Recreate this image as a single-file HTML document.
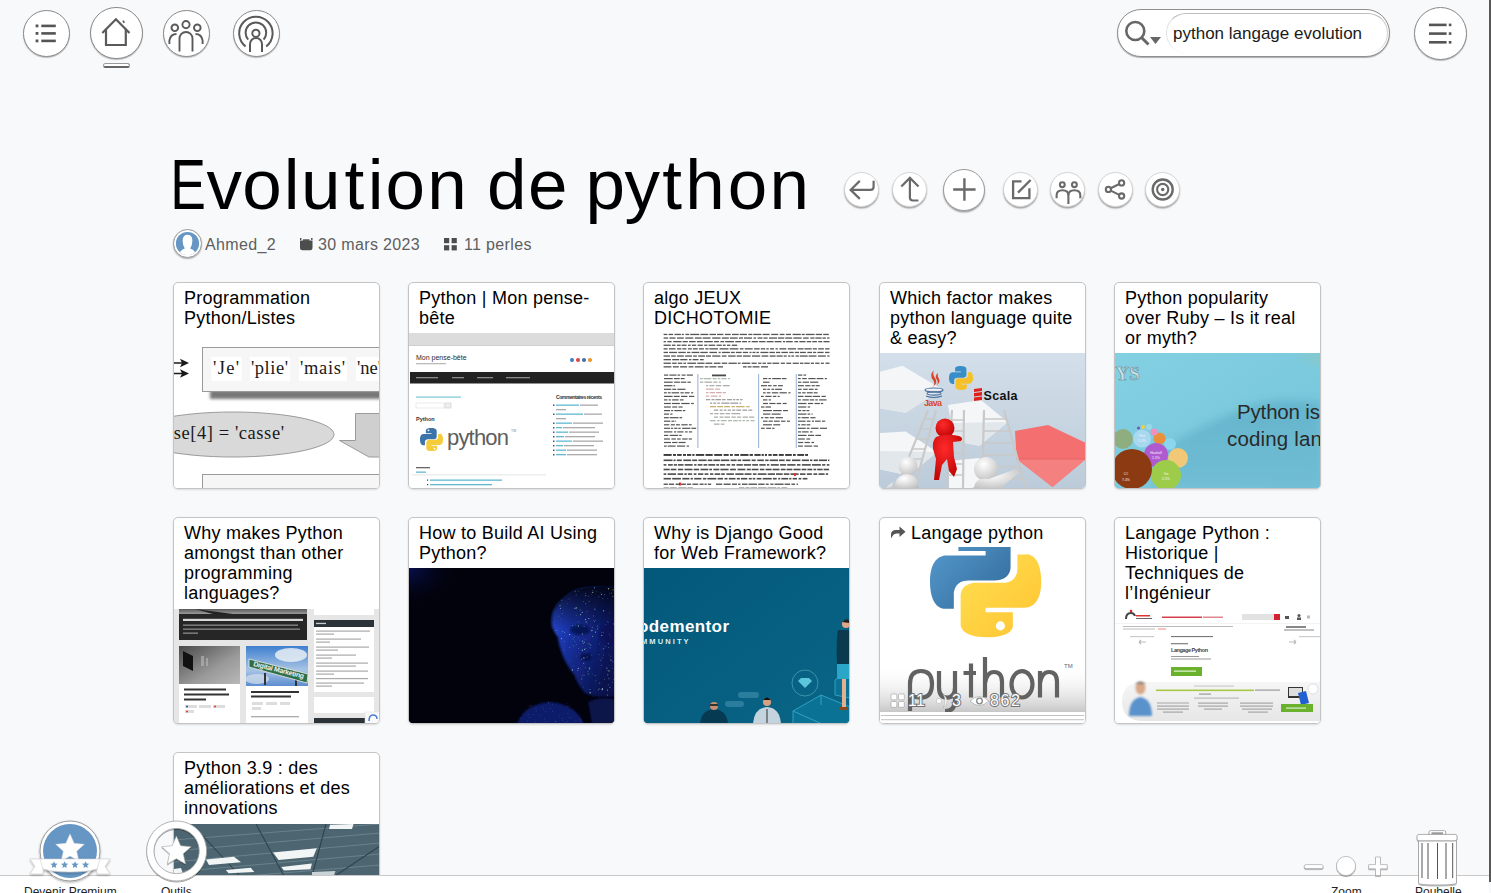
<!DOCTYPE html>
<html><head><meta charset="utf-8">
<style>
*{box-sizing:border-box;margin:0;padding:0}
html,body{width:1491px;height:893px;overflow:hidden}
body{background:#f8f9fb;font-family:"Liberation Sans",sans-serif;position:relative;color:#000}
.abs{position:absolute}
.circ{position:absolute;border-radius:50%;background:#fff;border:1.5px solid #8a8a8a;box-shadow:0 1px 1px rgba(0,0,0,.25)}
.circ svg{position:absolute;left:0;top:0}
.act{position:absolute;border-radius:50%;background:#fff;border:1px solid #d6d6d6;box-shadow:0 1.5px 1.5px rgba(0,0,0,.35)}
.act svg{position:absolute;left:0;top:0}
.card{position:absolute;width:207px;height:207px;background:#fff;border:1px solid #c4c4c4;border-radius:5px;box-shadow:0 1px 2px rgba(0,0,0,.12);overflow:hidden}
.card .t{position:absolute;left:10px;top:5px;width:190px;font-size:18px;line-height:20px;letter-spacing:0.25px;color:#000;white-space:nowrap}
.card .img{position:absolute;left:-1px;right:-1px;bottom:-1px;overflow:hidden;border-radius:0 0 5px 5px}
.card .img svg{display:block}
#bottom{position:absolute;left:0;top:875px;width:1489px;height:18px;background:#fff;border-top:1px solid #c9c9c9}
.meta{font-size:16px;color:#5e5e5e;letter-spacing:0.35px;white-space:nowrap;line-height:20px;margin-top:1px}
.lbl{position:absolute;top:885px;font-size:12px;color:#222;white-space:nowrap}
</style></head>
<body>

<!-- top nav circles -->
<div class="circ" style="left:23px;top:9.5px;width:47px;height:47px">
 <svg width="44" height="44" viewBox="0 0 44 44"><g fill="#555"><rect x="11.6" y="13.5" width="2.8" height="2.8"/><rect x="11.6" y="21" width="2.8" height="2.8"/><rect x="11.6" y="28.5" width="2.8" height="2.8"/><rect x="17.3" y="13.6" width="14.5" height="2.6"/><rect x="17.3" y="21.1" width="14.5" height="2.6"/><rect x="17.3" y="28.6" width="14.5" height="2.6"/></g></svg>
</div>
<div class="circ" style="left:90px;top:6.5px;width:52.5px;height:52.5px">
 <svg width="50" height="50" viewBox="0 0 50 50"><path d="M11.3 24.9 L24.9 11.2 L38.5 24.9" fill="none" stroke="#5a5a5a" stroke-width="2.2"/><path d="M15 20.8 V37 H34.8 V20.8" fill="none" stroke="#5a5a5a" stroke-width="2.2"/><rect x="31.8" y="12.5" width="1.7" height="2.6" fill="#5a5a5a" transform="rotate(-25 32.6 13.8)"/></svg>
</div>
<div class="abs" style="left:103px;top:63px;width:27px;height:5px;border-radius:3px;background:#fff;border:1px solid #9a9a9a;border-bottom:2px solid #666"></div>
<div class="circ" style="left:163px;top:9.5px;width:47px;height:47px">
 <svg width="44" height="44" viewBox="0 0 44 44" fill="none" stroke="#5a5a5a" stroke-width="1.9"><circle cx="22" cy="13.6" r="3.6"/><circle cx="10.8" cy="16.8" r="3.3"/><circle cx="33.3" cy="16.8" r="3.3"/><path d="M15.5 40.5 V27.5 A6.5 6.5 0 0 1 28.5 27.5 V40.5"/><path d="M12.5 23 Q6.5 23 5.4 29.5 V33"/><path d="M31.5 23 Q37.5 23 38.6 29.5 V33"/></svg>
</div>
<div class="circ" style="left:233px;top:9.5px;width:47px;height:47px">
 <svg width="44" height="44" viewBox="0 0 44 44" fill="none" stroke="#5a5a5a" stroke-width="2"><circle cx="21.9" cy="22.3" r="3.6"/><path d="M11.6 35.5 A16.7 16.7 0 1 1 32.2 35.5"/><path d="M14.2 28.6 A10.3 10.3 0 1 1 29.6 28.6"/><path d="M16 41 V33 A6 6 0 0 1 28 33 V41"/></svg>
</div>

<!-- search -->
<div class="abs" style="left:1117px;top:9px;width:273px;height:48px;border-radius:24px;background:#fff;border:1.5px solid #8f8f8f;box-shadow:0 1px 1px rgba(0,0,0,.3)"></div>
<div class="abs" style="left:1166px;top:13px;width:222px;height:40px;border-radius:20px;background:#fff;border-top:1.5px solid #bdbdbd;border-left:1px solid #e3e3e3;border-right:1.5px solid #cfcfcf"></div>
<svg class="abs" style="left:1120px;top:12px" width="48" height="40" viewBox="0 0 48 40"><circle cx="15.3" cy="19" r="9" fill="none" stroke="#666" stroke-width="2.6"/><path d="M21.5 25.5 L28.5 32.5" stroke="#666" stroke-width="3" stroke-linecap="butt"/><path d="M30 25 H41 L35.5 32 Z" fill="#666"/></svg>
<div class="abs" style="left:1173px;top:24px;font-size:17px;color:#1a1a1a;white-space:nowrap">python langage evolution</div>

<div class="circ" style="left:1414px;top:7px;width:53px;height:53px">
 <svg width="50" height="50" viewBox="0 0 50 50"><g fill="#555"><rect x="14" y="15.6" width="17.6" height="2.6"/><rect x="14" y="24.3" width="17.6" height="2.6"/><rect x="14" y="33" width="17.6" height="2.6"/><rect x="33.8" y="15.6" width="2.6" height="2.6"/><rect x="33.8" y="24.3" width="2.6" height="2.6"/><rect x="33.8" y="33" width="2.6" height="2.6"/></g></svg>
</div>
<div class="abs" style="left:1489px;top:0;width:2px;height:882px;background:#585858"></div>

<!-- title -->
<svg class="abs" style="left:0;top:130px" width="840" height="100" viewBox="0 130 840 100" font-family="Liberation Sans" font-size="71" fill="#000">
<text transform="translate(170.18,0) scale(0.7526,1)" x="0" y="209">E</text>
<text x="206.6 242.2 283.8 301.1 344.4 367.7 385.6 427.2" y="209">volution</text>
<text x="487.0 528.1" y="209">de</text>
<text x="585.6 624.4 662.2 685.3 727.8 769.4" y="209">python</text>
</svg>

<!-- action buttons -->
<div class="act" style="left:844px;top:172px;width:35px;height:35px"><svg width="33" height="33" viewBox="0 0 33 33" fill="none" stroke="#6a6a6a" stroke-width="2.2"><path d="M14.8 7.9 L5.6 16.9 L14.8 25.9"/><path d="M5.8 16.9 H25.5 Q28.6 16.9 28.6 13.8 V7.8"/></svg></div>
<div class="act" style="left:892px;top:172px;width:35px;height:35px"><svg width="33" height="33" viewBox="0 0 33 33" fill="none" stroke="#6a6a6a" stroke-width="2.2"><path d="M8.3 13.6 L16.9 4.9 L25.5 13.6"/><path d="M16.9 5.2 V24.5 Q16.9 27.5 19.9 27.5 H25.4"/></svg></div>
<div class="act" style="left:943px;top:169px;width:42px;height:42px;border-color:#9c9c9c"><svg width="40" height="40" viewBox="0 0 40 40" stroke="#6a6a6a" stroke-width="2.4"><path d="M9.2 19.5 H31.6 M20.4 8.3 V30.7"/></svg></div>
<div class="act" style="left:1003px;top:172px;width:35px;height:35px"><svg width="33" height="33" viewBox="0 0 33 33" fill="none" stroke="#6a6a6a" stroke-width="2.3"><path d="M17.5 8.3 H9.1 V25.1 H25.4 V15.3"/><path d="M14 19.6 L26.6 7"/></svg></div>
<div class="act" style="left:1050px;top:172px;width:35px;height:35px"><svg width="33" height="33" viewBox="0 0 33 33" fill="none" stroke="#6a6a6a" stroke-width="2.1"><circle cx="11.3" cy="11.7" r="2.4"/><circle cx="23.4" cy="11.7" r="2.4"/><path d="M5.6 25.3 V22.2 Q5.6 17.2 11.5 17.2 Q17.4 17.2 17.4 22.2 V31"/><path d="M17.4 22.2 Q17.4 17.2 23.4 17.2 Q29.3 17.2 29.3 22.2 V25.3"/></svg></div>
<div class="act" style="left:1098px;top:172px;width:35px;height:35px"><svg width="33" height="33" viewBox="0 0 33 33" fill="none" stroke="#6a6a6a" stroke-width="2.1"><circle cx="9.4" cy="16.4" r="2.6"/><circle cx="22.6" cy="9.9" r="2.6"/><circle cx="22.6" cy="23" r="2.6"/><path d="M11.7 15.2 L20.3 11 M11.7 17.6 L20.3 21.9"/></svg></div>
<div class="act" style="left:1145px;top:172px;width:35px;height:35px"><svg width="33" height="33" viewBox="0 0 33 33" fill="none" stroke="#6a6a6a"><circle cx="16.7" cy="16.5" r="10" stroke-width="2.4"/><circle cx="16.7" cy="16.5" r="5.6" stroke-width="2.1"/><circle cx="16.7" cy="16.5" r="1.7" fill="#6a6a6a" stroke="none"/></svg></div>

<!-- meta -->
<div class="abs" style="left:173px;top:229px;width:29px;height:29px;border-radius:50%;background:#fff;border:1px solid #9a9a9a;box-shadow:0 1px 1.5px rgba(0,0,0,.3)"><svg width="27" height="27" viewBox="0 0 27 27" style="position:absolute;left:0;top:0"><circle cx="13.5" cy="13.5" r="11.6" fill="#6596c4"/><clipPath id="avc"><circle cx="13.5" cy="13.5" r="11.6"/></clipPath><path clip-path="url(#avc)" d="M4 27 Q5 20.5 10.8 18.5 Q8.6 15 8.6 10.5 Q8.8 4.8 13.5 4.8 Q18.2 4.8 18.4 10.5 Q18.4 15 16.2 18.5 Q22 20.5 23 27Z" fill="#fff"/></svg></div>
<div class="abs meta" style="left:205px;top:234px">Ahmed_2</div>
<svg class="abs" style="left:300px;top:238px" width="13" height="13" viewBox="0 0 13 13"><path d="M0 2.5 H12.5 V10 Q12.5 12.3 10.2 12.3 H2.3 Q0 12.3 0 10 Z" fill="#4d4d4d"/><rect x="0" y="0" width="1.4" height="2" fill="#4d4d4d"/><rect x="11.1" y="0" width="1.4" height="2" fill="#4d4d4d"/><rect x="3" y="1.3" width="6.5" height="1.6" fill="#4d4d4d"/></svg>
<div class="abs meta" style="left:318px;top:234px">30 mars 2023</div>
<svg class="abs" style="left:444px;top:238px" width="13" height="13" viewBox="0 0 13 13" fill="#4d4d4d"><rect x="0" y="0" width="5.2" height="5.2"/><rect x="7.6" y="0" width="5.2" height="5.2"/><rect x="0" y="7.2" width="5.2" height="5.2"/><rect x="7.6" y="7.2" width="5.2" height="5.2"/></svg>
<div class="abs meta" style="left:464px;top:234px">11 perles</div>

<!-- cards -->
<div class="card" style="left:173px;top:282px"><div class="t">Programmation<br>Python/Listes</div><div class="img" style="top:50px;background:#f4f4f4"><svg width="207" height="156" viewBox="0 0 207 156" font-family="Liberation Serif">
<defs><filter id="b1" x="-10%" y="-50%" width="120%" height="200%"><feGaussianBlur stdDeviation="1.6"/></filter></defs>
<rect width="207" height="156" fill="#fff"/>
<rect x="37" y="57" width="175" height="9" fill="#6a6a6a" opacity=".9" filter="url(#b1)"/>
<rect x="29.5" y="14.5" width="180" height="44" fill="#f6f6f6" stroke="#9a9a9a"/>
<g fill="#fff"><rect x="38.5" y="24" width="30" height="24"/><rect x="77" y="24" width="40" height="24"/><rect x="126" y="24" width="48" height="24"/><rect x="183" y="24" width="30" height="24"/></g>
<g font-size="18.5" fill="#1a1a1a"><text x="40" y="40.5" textLength="26">'Je'</text><text x="78" y="40.5" textLength="37">'plie'</text><text x="127" y="40.5" textLength="45">'mais'</text><text x="184" y="40.5">'ne'</text></g>
<g stroke="#1a1a1a" stroke-width="1.4"><path d="M0 30 H10 M0 40.5 H10"/></g><g fill="#1a1a1a"><path d="M7 25.8 L16 30 L7 34.2 L9 30Z"/><path d="M7 36.3 L16 40.5 L7 44.7 L9 40.5Z"/></g>
<ellipse cx="60" cy="101.5" rx="101" ry="22.5" fill="#d9d9d9" stroke="#9a9a9a"/>
<text x="-8" y="106" font-size="18.5" fill="#1a1a1a" textLength="119">ase[4] = 'casse'</text>
<path d="M182.5 80.5 H210 V124 L196 124 L166.5 107.5 H182.5Z" fill="#cfcfcf" stroke="#9a9a9a"/>
<rect x="29.5" y="141.5" width="180" height="30" fill="#f6f6f6" stroke="#9a9a9a"/>
<rect x="0" y="0" width="1" height="156" fill="#cfcfcf"/>
</svg></div></div>
<div class="card" style="left:408px;top:282px"><div class="t">Python | Mon pense-<br>bête</div><div class="img" style="top:50px;background:#eee"><svg width="207" height="156" viewBox="0 0 207 156" font-family="Liberation Sans">
<rect width="207" height="156" fill="#fff"/>
<rect x="0" y="0" width="207" height="12" fill="#dcdcdc"/>
<rect x="0" y="12" width="207" height="1" fill="#cfcfcf"/>
<text x="8" y="27" font-size="7" fill="#2a2a2a">Mon pense-bête</text>
<rect x="8" y="30" width="30" height="1.3" fill="#bbb"/>
<circle cx="164" cy="27" r="2" fill="#3b7fc4"/><circle cx="170" cy="27" r="2" fill="#d44"/><circle cx="176" cy="27" r="2" fill="#3b6fb4"/><circle cx="182" cy="27" r="2" fill="#e8962a"/>
<rect x="2" y="39" width="204" height="11.5" fill="#222"/>
<g fill="#8a8a8a"><rect x="8" y="44" width="22" height="1.3"/><rect x="44" y="44" width="12" height="1.3"/><rect x="69" y="44" width="16" height="1.3"/><rect x="98" y="44" width="24" height="1.3"/></g>
<rect x="8" y="63.5" width="45" height="1.2" fill="#7cc5d8"/>
<rect x="8" y="70" width="28" height="5" fill="#fff" stroke="#ddd" stroke-width=".6"/><rect x="37" y="70" width="6" height="5" fill="#eee" stroke="#ccc" stroke-width=".6"/>
<text x="8" y="88" font-size="5.5" font-weight="bold" fill="#333">Python</text>
<g transform="translate(12,95) scale(0.235)">
<path d="M48 0 C23 0 25 11 25 11 V22 H49 V26 H15 C15 26 0 24 0 49 C0 74 13 73 13 73 H21 V61 C21 61 20 48 34 48 H58 C58 48 71 48 71 36 V12 C71 12 73 0 48 0Z" fill="#3a74a8"/>
<path d="M50 98 C75 98 73 87 73 87 V76 H49 V72 H83 C83 72 98 74 98 49 C98 24 85 25 85 25 H77 V37 C77 37 78 50 64 50 H40 C40 50 27 50 27 62 V86 C27 86 25 98 50 98Z" fill="#f5cc3a"/>
<circle cx="36" cy="10" r="4" fill="#fff"/><circle cx="62" cy="88" r="4" fill="#fff"/>
</g>
<text x="39" y="112" font-size="22" fill="#5e5e5e" textLength="62">python</text>
<text x="103" y="99" font-size="3.5" fill="#888">TM</text>
<text x="148" y="66" font-size="5" font-weight="bold" fill="#333" textLength="46">Commentaires récents</text>
<g fill="#555"><rect x="145" y="71.5" width="1.5" height="1.5"/><rect x="145" y="80.5" width="1.5" height="1.5"/><rect x="145" y="89.5" width="1.5" height="1.5"/><rect x="145" y="94" width="1.5" height="1.5"/><rect x="145" y="98.5" width="1.5" height="1.5"/><rect x="145" y="103" width="1.5" height="1.5"/><rect x="145" y="107.5" width="1.5" height="1.5"/><rect x="145" y="112" width="1.5" height="1.5"/><rect x="145" y="116.5" width="1.5" height="1.5"/><rect x="145" y="121" width="1.5" height="1.5"/></g>
<g fill="#62b7d2"><rect x="148" y="71.5" width="23" height="1.3"/><rect x="148" y="80.5" width="27" height="1.3"/><rect x="148" y="89.5" width="16" height="1.3"/><rect x="148" y="94" width="6" height="1.3"/><rect x="148" y="98.5" width="12" height="1.3"/><rect x="148" y="103" width="8" height="1.3"/><rect x="148" y="107.5" width="16" height="1.3"/><rect x="148" y="112" width="7" height="1.3"/><rect x="148" y="116.5" width="10" height="1.3"/><rect x="148" y="121" width="10" height="1.3"/></g>
<g fill="#aaa"><rect x="172" y="71.5" width="18" height="1.3"/><rect x="148" y="76" width="10" height="1.3"/><rect x="176" y="80.5" width="18" height="1.3"/><rect x="148" y="85" width="10" height="1.3"/><rect x="165" y="89.5" width="30" height="1.3"/><rect x="155" y="94" width="32" height="1.3"/><rect x="161" y="98.5" width="30" height="1.3"/><rect x="157" y="103" width="30" height="1.3"/><rect x="165" y="107.5" width="30" height="1.3"/><rect x="156" y="112" width="30" height="1.3"/><rect x="159" y="116.5" width="30" height="1.3"/><rect x="159" y="121" width="30" height="1.3"/></g>
<rect x="8" y="134" width="14" height="1.3" fill="#666"/>
<rect x="8" y="138.5" width="10" height="1.3" fill="#62b7d2"/>
<rect x="4" y="141.5" width="134" height=".8" fill="#ddd"/>
<g fill="#444"><rect x="19" y="146.5" width="1.2" height="1.2"/><rect x="19" y="151" width="1.2" height="1.2"/><rect x="19" y="155.5" width="1.2" height="1.2"/></g>
<g fill="#62b7d2"><rect x="22" y="146.5" width="72" height="1.3"/><rect x="22" y="151" width="62" height="1.3"/><rect x="22" y="155.5" width="68" height="1.3"/></g>
</svg></div></div>
<div class="card" style="left:643px;top:282px"><div class="t">algo JEUX<br>DICHOTOMIE</div><div class="img" style="top:50px;background:#ddd"><svg width="207" height="156" viewBox="0 0 207 156">
<rect width="207" height="156" fill="#fff"/>
<g fill="#555" opacity="1"><rect x="20.6" y="0.8" width="3.7" height="1.3"/><rect x="25.5" y="0.8" width="4.6" height="1.3"/><rect x="31.5" y="0.8" width="6.4" height="1.3"/><rect x="38.8" y="0.8" width="2.1" height="1.3"/><rect x="42.4" y="0.8" width="3.8" height="1.3"/><rect x="47.2" y="0.8" width="9.0" height="1.3"/><rect x="57.4" y="0.8" width="7.9" height="1.3"/><rect x="66.5" y="0.8" width="6.5" height="1.3"/><rect x="74.0" y="0.8" width="6.4" height="1.3"/><rect x="82.0" y="0.8" width="5.7" height="1.3"/><rect x="89.0" y="0.8" width="6.7" height="1.3"/><rect x="96.7" y="0.8" width="7.3" height="1.3"/><rect x="105.3" y="0.8" width="4.1" height="1.3"/><rect x="110.3" y="0.8" width="8.1" height="1.3"/><rect x="119.6" y="0.8" width="7.0" height="1.3"/><rect x="128.2" y="0.8" width="7.0" height="1.3"/><rect x="136.7" y="0.8" width="4.8" height="1.3"/><rect x="142.9" y="0.8" width="5.1" height="1.3"/><rect x="149.6" y="0.8" width="8.2" height="1.3"/><rect x="158.7" y="0.8" width="3.0" height="1.3"/><rect x="162.7" y="0.8" width="8.8" height="1.3"/><rect x="172.7" y="0.8" width="6.4" height="1.3"/><rect x="180.2" y="0.8" width="5.6" height="1.3"/></g>
<g fill="#555" opacity="1"><rect x="20.6" y="4.4" width="4.5" height="1.3"/><rect x="26.4" y="4.4" width="6.1" height="1.3"/><rect x="34.0" y="4.4" width="6.8" height="1.3"/><rect x="42.3" y="4.4" width="8.0" height="1.3"/><rect x="51.9" y="4.4" width="6.7" height="1.3"/><rect x="59.6" y="4.4" width="8.0" height="1.3"/><rect x="69.2" y="4.4" width="8.3" height="1.3"/><rect x="78.8" y="4.4" width="7.0" height="1.3"/><rect x="86.9" y="4.4" width="7.8" height="1.3"/><rect x="96.0" y="4.4" width="4.0" height="1.3"/><rect x="101.0" y="4.4" width="8.0" height="1.3"/><rect x="110.5" y="4.4" width="2.6" height="1.3"/><rect x="114.6" y="4.4" width="4.9" height="1.3"/><rect x="120.5" y="4.4" width="4.1" height="1.3"/><rect x="126.0" y="4.4" width="8.1" height="1.3"/><rect x="135.0" y="4.4" width="6.3" height="1.3"/><rect x="142.2" y="4.4" width="7.0" height="1.3"/><rect x="150.4" y="4.4" width="8.2" height="1.3"/><rect x="160.2" y="4.4" width="5.5" height="1.3"/><rect x="167.3" y="4.4" width="4.2" height="1.3"/><rect x="172.4" y="4.4" width="6.2" height="1.3"/><rect x="179.5" y="4.4" width="3.4" height="1.3"/><rect x="184.1" y="4.4" width="2.4" height="1.3"/></g>
<g fill="#555" opacity="1"><rect x="20.6" y="8.0" width="2.3" height="1.3"/><rect x="24.4" y="8.0" width="4.2" height="1.3"/><rect x="30.2" y="8.0" width="8.3" height="1.3"/><rect x="39.6" y="8.0" width="5.2" height="1.3"/><rect x="46.1" y="8.0" width="6.5" height="1.3"/><rect x="53.9" y="8.0" width="5.9" height="1.3"/><rect x="61.2" y="8.0" width="8.6" height="1.3"/><rect x="71.0" y="8.0" width="5.0" height="1.3"/><rect x="77.4" y="8.0" width="3.7" height="1.3"/><rect x="82.2" y="8.0" width="8.8" height="1.3"/><rect x="92.3" y="8.0" width="5.8" height="1.3"/><rect x="99.1" y="8.0" width="4.9" height="1.3"/><rect x="105.3" y="8.0" width="2.1" height="1.3"/><rect x="108.7" y="8.0" width="6.4" height="1.3"/><rect x="116.1" y="8.0" width="6.4" height="1.3"/><rect x="123.7" y="8.0" width="6.8" height="1.3"/><rect x="131.6" y="8.0" width="6.9" height="1.3"/><rect x="140.0" y="8.0" width="2.2" height="1.3"/><rect x="143.1" y="8.0" width="6.7" height="1.3"/><rect x="151.4" y="8.0" width="3.8" height="1.3"/><rect x="156.4" y="8.0" width="6.1" height="1.3"/><rect x="163.7" y="8.0" width="4.5" height="1.3"/><rect x="169.3" y="8.0" width="4.6" height="1.3"/><rect x="175.2" y="8.0" width="4.1" height="1.3"/><rect x="180.5" y="8.0" width="6.0" height="1.3"/></g>
<g fill="#555" opacity="1"><rect x="20.6" y="11.6" width="7.1" height="1.3"/><rect x="28.9" y="11.6" width="3.6" height="1.3"/><rect x="33.9" y="11.6" width="3.7" height="1.3"/><rect x="38.6" y="11.6" width="5.0" height="1.3"/><rect x="45.0" y="11.6" width="2.7" height="1.3"/><rect x="48.9" y="11.6" width="4.3" height="1.3"/><rect x="54.7" y="11.6" width="5.1" height="1.3"/><rect x="61.2" y="11.6" width="3.2" height="1.3"/><rect x="65.6" y="11.6" width="6.6" height="1.3"/><rect x="73.6" y="11.6" width="5.2" height="1.3"/><rect x="79.9" y="11.6" width="2.8" height="1.3"/><rect x="84.0" y="11.6" width="3.3" height="1.3"/><rect x="88.8" y="11.6" width="5.4" height="1.3"/></g>
<g fill="#555" opacity="1"><rect x="20.6" y="15.2" width="4.0" height="1.3"/><rect x="26.0" y="15.2" width="6.5" height="1.3"/><rect x="34.0" y="15.2" width="4.4" height="1.3"/><rect x="39.4" y="15.2" width="4.0" height="1.3"/><rect x="44.9" y="15.2" width="3.9" height="1.3"/><rect x="49.9" y="15.2" width="4.9" height="1.3"/><rect x="56.0" y="15.2" width="4.9" height="1.3"/><rect x="62.4" y="15.2" width="3.1" height="1.3"/><rect x="66.4" y="15.2" width="8.6" height="1.3"/><rect x="76.6" y="15.2" width="8.9" height="1.3"/><rect x="86.7" y="15.2" width="8.7" height="1.3"/><rect x="96.9" y="15.2" width="3.6" height="1.3"/><rect x="101.8" y="15.2" width="7.9" height="1.3"/><rect x="111.1" y="15.2" width="5.6" height="1.3"/><rect x="117.8" y="15.2" width="4.4" height="1.3"/><rect x="123.3" y="15.2" width="2.5" height="1.3"/><rect x="127.0" y="15.2" width="4.0" height="1.3"/><rect x="132.5" y="15.2" width="2.3" height="1.3"/><rect x="136.4" y="15.2" width="6.9" height="1.3"/><rect x="144.8" y="15.2" width="8.3" height="1.3"/><rect x="154.6" y="15.2" width="6.0" height="1.3"/><rect x="161.5" y="15.2" width="7.2" height="1.3"/><rect x="169.8" y="15.2" width="4.1" height="1.3"/><rect x="175.2" y="15.2" width="5.7" height="1.3"/><rect x="182.1" y="15.2" width="4.4" height="1.3"/></g>
<g fill="#555" opacity="1"><rect x="20.6" y="18.8" width="4.4" height="1.3"/><rect x="26.1" y="18.8" width="8.0" height="1.3"/><rect x="35.3" y="18.8" width="7.5" height="1.3"/><rect x="44.0" y="18.8" width="3.4" height="1.3"/><rect x="48.6" y="18.8" width="7.7" height="1.3"/><rect x="57.3" y="18.8" width="7.5" height="1.3"/><rect x="66.4" y="18.8" width="7.6" height="1.3"/><rect x="75.6" y="18.8" width="2.1" height="1.3"/><rect x="78.9" y="18.8" width="8.0" height="1.3"/><rect x="87.9" y="18.8" width="3.9" height="1.3"/><rect x="92.9" y="18.8" width="5.7" height="1.3"/><rect x="99.8" y="18.8" width="5.3" height="1.3"/><rect x="106.5" y="18.8" width="2.0" height="1.3"/><rect x="109.5" y="18.8" width="2.9" height="1.3"/><rect x="113.4" y="18.8" width="2.5" height="1.3"/><rect x="117.4" y="18.8" width="8.0" height="1.3"/><rect x="126.4" y="18.8" width="5.5" height="1.3"/><rect x="133.0" y="18.8" width="4.2" height="1.3"/><rect x="138.4" y="18.8" width="6.5" height="1.3"/><rect x="146.2" y="18.8" width="4.5" height="1.3"/><rect x="151.8" y="18.8" width="4.3" height="1.3"/><rect x="157.0" y="18.8" width="5.9" height="1.3"/><rect x="164.3" y="18.8" width="4.7" height="1.3"/><rect x="170.0" y="18.8" width="3.2" height="1.3"/><rect x="174.4" y="18.8" width="6.2" height="1.3"/><rect x="182.0" y="18.8" width="4.5" height="1.3"/></g>
<g fill="#555" opacity="1"><rect x="20.6" y="22.4" width="6.4" height="1.3"/><rect x="28.2" y="22.4" width="4.6" height="1.3"/><rect x="34.0" y="22.4" width="6.9" height="1.3"/><rect x="42.1" y="22.4" width="6.9" height="1.3"/><rect x="50.2" y="22.4" width="3.7" height="1.3"/><rect x="55.2" y="22.4" width="6.9" height="1.3"/><rect x="63.0" y="22.4" width="5.0" height="1.3"/><rect x="69.2" y="22.4" width="8.2" height="1.3"/><rect x="78.9" y="22.4" width="4.6" height="1.3"/><rect x="85.1" y="22.4" width="7.5" height="1.3"/><rect x="93.7" y="22.4" width="5.2" height="1.3"/><rect x="99.9" y="22.4" width="7.7" height="1.3"/><rect x="109.0" y="22.4" width="8.2" height="1.3"/><rect x="118.6" y="22.4" width="6.7" height="1.3"/><rect x="126.7" y="22.4" width="5.9" height="1.3"/><rect x="133.6" y="22.4" width="6.1" height="1.3"/><rect x="140.7" y="22.4" width="3.0" height="1.3"/><rect x="145.1" y="22.4" width="2.3" height="1.3"/><rect x="148.4" y="22.4" width="2.7" height="1.3"/><rect x="152.6" y="22.4" width="3.3" height="1.3"/><rect x="156.8" y="22.4" width="7.9" height="1.3"/><rect x="165.6" y="22.4" width="7.9" height="1.3"/><rect x="174.9" y="22.4" width="7.9" height="1.3"/><rect x="184.3" y="22.4" width="2.2" height="1.3"/></g>
<g fill="#555" opacity="1"><rect x="20.6" y="26.0" width="7.4" height="1.3"/><rect x="29.2" y="26.0" width="7.0" height="1.3"/><rect x="37.2" y="26.0" width="7.2" height="1.3"/><rect x="46.0" y="26.0" width="2.4" height="1.3"/><rect x="49.6" y="26.0" width="5.9" height="1.3"/><rect x="57.0" y="26.0" width="3.7" height="1.3"/></g>
<g fill="#555" opacity="1"><rect x="20.6" y="29.6" width="7.3" height="1.3"/><rect x="29.1" y="29.6" width="4.6" height="1.3"/><rect x="34.8" y="29.6" width="4.5" height="1.3"/><rect x="40.4" y="29.6" width="2.6" height="1.3"/><rect x="44.3" y="29.6" width="8.8" height="1.3"/><rect x="54.3" y="29.6" width="7.2" height="1.3"/><rect x="62.5" y="29.6" width="6.8" height="1.3"/><rect x="70.8" y="29.6" width="6.7" height="1.3"/><rect x="78.8" y="29.6" width="5.4" height="1.3"/><rect x="85.5" y="29.6" width="8.3" height="1.3"/><rect x="94.8" y="29.6" width="2.7" height="1.3"/><rect x="98.9" y="29.6" width="8.4" height="1.3"/><rect x="108.6" y="29.6" width="5.1" height="1.3"/><rect x="115.1" y="29.6" width="3.3" height="1.3"/><rect x="119.5" y="29.6" width="3.4" height="1.3"/><rect x="124.2" y="29.6" width="4.2" height="1.3"/><rect x="129.4" y="29.6" width="6.8" height="1.3"/><rect x="137.8" y="29.6" width="4.1" height="1.3"/><rect x="143.3" y="29.6" width="4.9" height="1.3"/><rect x="149.7" y="29.6" width="6.1" height="1.3"/><rect x="156.9" y="29.6" width="3.5" height="1.3"/><rect x="161.3" y="29.6" width="5.4" height="1.3"/><rect x="167.8" y="29.6" width="3.2" height="1.3"/><rect x="172.2" y="29.6" width="4.3" height="1.3"/><rect x="177.9" y="29.6" width="3.0" height="1.3"/><rect x="182.5" y="29.6" width="4.0" height="1.3"/></g>
<g fill="#555" opacity="1"><rect x="20.6" y="33.2" width="7.8" height="1.3"/><rect x="29.9" y="33.2" width="5.9" height="1.3"/><rect x="37.1" y="33.2" width="7.0" height="1.3"/><rect x="45.6" y="33.2" width="4.8" height="1.3"/><rect x="51.8" y="33.2" width="8.7" height="1.3"/><rect x="61.8" y="33.2" width="3.6" height="1.3"/><rect x="66.4" y="33.2" width="7.0" height="1.3"/><rect x="74.8" y="33.2" width="5.2" height="1.3"/></g>
<g fill="#555" opacity="1"><rect x="100.0" y="33.2" width="3.7" height="1.3"/><rect x="104.7" y="33.2" width="3.8" height="1.3"/><rect x="109.6" y="33.2" width="6.9" height="1.3"/><rect x="118.0" y="33.2" width="7.0" height="1.3"/></g>
<g fill="#7b9cc8"><rect x="54.5" y="41" width=".8" height="74"/><rect x="115.3" y="41" width=".8" height="74"/><rect x="152.8" y="41" width=".8" height="74"/></g>
<rect x="69" y="41.5" width="14" height="1.8" fill="#4a4a4a"/>
<g fill="#555" opacity="1"><rect x="21.0" y="41.5" width="4.2" height="1.2"/><rect x="26.4" y="41.5" width="7.1" height="1.2"/><rect x="34.5" y="41.5" width="2.6" height="1.2"/><rect x="38.6" y="41.5" width="4.0" height="1.2"/><rect x="43.8" y="41.5" width="6.1" height="1.2"/></g>
<g fill="#555" opacity="1"><rect x="155.0" y="41.5" width="4.3" height="1.2"/><rect x="160.5" y="41.5" width="2.6" height="1.2"/></g>
<g fill="#555" opacity="1"><rect x="21.0" y="45.0" width="8.7" height="1.2"/><rect x="30.9" y="45.0" width="5.8" height="1.2"/><rect x="37.7" y="45.0" width="3.9" height="1.2"/></g>
<g fill="#555" opacity="1"><rect x="155.0" y="45.0" width="2.7" height="1.2"/><rect x="159.2" y="45.0" width="4.6" height="1.2"/><rect x="165.3" y="45.0" width="7.3" height="1.2"/><rect x="173.7" y="45.0" width="6.7" height="1.2"/><rect x="181.8" y="45.0" width="2.1" height="1.2"/></g>
<g fill="#555" opacity="1"><rect x="21.0" y="48.6" width="8.7" height="1.2"/><rect x="31.1" y="48.6" width="5.8" height="1.2"/><rect x="37.8" y="48.6" width="5.5" height="1.2"/><rect x="44.4" y="48.6" width="3.4" height="1.2"/></g>
<g fill="#555" opacity="1"><rect x="155.0" y="48.6" width="3.3" height="1.2"/><rect x="159.6" y="48.6" width="6.4" height="1.2"/><rect x="167.1" y="48.6" width="8.2" height="1.2"/></g>
<g fill="#555" opacity="1"><rect x="21.0" y="52.1" width="8.5" height="1.2"/><rect x="30.5" y="52.1" width="1.6" height="1.2"/></g>
<g fill="#555" opacity="1"><rect x="155.0" y="52.1" width="5.9" height="1.2"/><rect x="162.2" y="52.1" width="5.2" height="1.2"/><rect x="168.6" y="52.1" width="3.2" height="1.2"/><rect x="172.7" y="52.1" width="4.0" height="1.2"/></g>
<g fill="#555" opacity="1"><rect x="21.0" y="55.7" width="7.2" height="1.2"/><rect x="29.3" y="55.7" width="3.9" height="1.2"/><rect x="34.4" y="55.7" width="8.1" height="1.2"/></g>
<g fill="#555" opacity="1"><rect x="155.0" y="55.7" width="3.7" height="1.2"/><rect x="160.2" y="55.7" width="4.5" height="1.2"/><rect x="165.8" y="55.7" width="4.8" height="1.2"/><rect x="171.9" y="55.7" width="2.7" height="1.2"/></g>
<g fill="#555" opacity="1"><rect x="21.0" y="59.2" width="2.8" height="1.2"/><rect x="24.9" y="59.2" width="2.7" height="1.2"/><rect x="28.6" y="59.2" width="7.5" height="1.2"/><rect x="37.4" y="59.2" width="3.3" height="1.2"/><rect x="41.7" y="59.2" width="4.9" height="1.2"/><rect x="48.1" y="59.2" width="2.1" height="1.2"/></g>
<g fill="#555" opacity="1"><rect x="155.0" y="59.2" width="3.0" height="1.2"/><rect x="159.2" y="59.2" width="3.4" height="1.2"/><rect x="163.8" y="59.2" width="6.0" height="1.2"/><rect x="170.8" y="59.2" width="3.8" height="1.2"/></g>
<g fill="#555" opacity="1"><rect x="21.0" y="62.8" width="8.6" height="1.2"/><rect x="30.8" y="62.8" width="5.9" height="1.2"/><rect x="38.0" y="62.8" width="6.4" height="1.2"/><rect x="46.0" y="62.8" width="5.3" height="1.2"/></g>
<g fill="#555" opacity="1"><rect x="155.0" y="62.8" width="5.4" height="1.2"/><rect x="161.7" y="62.8" width="7.1" height="1.2"/><rect x="169.7" y="62.8" width="7.4" height="1.2"/><rect x="178.5" y="62.8" width="4.3" height="1.2"/></g>
<g fill="#555" opacity="1"><rect x="21.0" y="66.3" width="3.4" height="1.2"/><rect x="25.6" y="66.3" width="2.3" height="1.2"/><rect x="29.1" y="66.3" width="6.5" height="1.2"/><rect x="36.9" y="66.3" width="3.6" height="1.2"/></g>
<g fill="#555" opacity="1"><rect x="155.0" y="66.3" width="2.9" height="1.2"/><rect x="159.4" y="66.3" width="6.4" height="1.2"/><rect x="166.7" y="66.3" width="4.5" height="1.2"/><rect x="172.3" y="66.3" width="2.5" height="1.2"/><rect x="176.1" y="66.3" width="7.4" height="1.2"/></g>
<g fill="#555" opacity="1"><rect x="21.0" y="69.9" width="6.9" height="1.2"/><rect x="28.9" y="69.9" width="8.0" height="1.2"/><rect x="38.2" y="69.9" width="8.5" height="1.2"/><rect x="48.1" y="69.9" width="2.7" height="1.2"/></g>
<g fill="#555" opacity="1"><rect x="155.0" y="69.9" width="8.5" height="1.2"/><rect x="165.0" y="69.9" width="5.1" height="1.2"/><rect x="171.5" y="69.9" width="5.4" height="1.2"/><rect x="177.9" y="69.9" width="2.3" height="1.2"/></g>
<g fill="#555" opacity="1"><rect x="21.0" y="73.4" width="6.9" height="1.2"/><rect x="29.2" y="73.4" width="5.0" height="1.2"/><rect x="35.5" y="73.4" width="4.1" height="1.2"/></g>
<g fill="#555" opacity="1"><rect x="155.0" y="73.4" width="8.3" height="1.2"/><rect x="164.7" y="73.4" width="2.5" height="1.2"/></g>
<g fill="#555" opacity="1"><rect x="21.0" y="77.0" width="6.2" height="1.2"/><rect x="28.2" y="77.0" width="2.0" height="1.2"/><rect x="31.3" y="77.0" width="7.5" height="1.2"/><rect x="39.8" y="77.0" width="2.5" height="1.2"/></g>
<g fill="#555" opacity="1"><rect x="155.0" y="77.0" width="3.2" height="1.2"/><rect x="159.4" y="77.0" width="3.2" height="1.2"/><rect x="163.5" y="77.0" width="2.8" height="1.2"/></g>
<g fill="#555" opacity="1"><rect x="21.0" y="80.5" width="5.1" height="1.2"/><rect x="27.3" y="80.5" width="2.2" height="1.2"/></g>
<g fill="#555" opacity="1"><rect x="21.0" y="84.1" width="4.8" height="1.2"/><rect x="26.7" y="84.1" width="8.8" height="1.2"/><rect x="36.5" y="84.1" width="2.6" height="1.2"/></g>
<g fill="#555" opacity="1"><rect x="21.0" y="87.6" width="6.4" height="1.2"/><rect x="28.5" y="87.6" width="2.9" height="1.2"/><rect x="32.3" y="87.6" width="0.8" height="1.2"/></g>
<g fill="#555" opacity="1"><rect x="21.0" y="91.2" width="5.3" height="1.2"/><rect x="27.8" y="91.2" width="4.1" height="1.2"/><rect x="33.0" y="91.2" width="3.9" height="1.2"/><rect x="38.3" y="91.2" width="6.4" height="1.2"/><rect x="45.9" y="91.2" width="2.7" height="1.2"/></g>
<g fill="#555" opacity="1"><rect x="21.0" y="94.7" width="6.1" height="1.2"/><rect x="28.0" y="94.7" width="2.2" height="1.2"/><rect x="31.2" y="94.7" width="3.2" height="1.2"/><rect x="35.3" y="94.7" width="2.4" height="1.2"/><rect x="39.1" y="94.7" width="8.3" height="1.2"/><rect x="48.4" y="94.7" width="4.8" height="1.2"/></g>
<g fill="#555" opacity="1"><rect x="21.0" y="98.3" width="8.4" height="1.2"/><rect x="31.0" y="98.3" width="2.2" height="1.2"/><rect x="34.3" y="98.3" width="6.2" height="1.2"/><rect x="42.1" y="98.3" width="2.6" height="1.2"/><rect x="45.9" y="98.3" width="3.2" height="1.2"/></g>
<g fill="#555" opacity="1"><rect x="21.0" y="101.8" width="4.3" height="1.2"/><rect x="26.7" y="101.8" width="8.5" height="1.2"/><rect x="36.2" y="101.8" width="2.5" height="1.2"/></g>
<g fill="#555" opacity="1"><rect x="21.0" y="105.4" width="5.9" height="1.2"/><rect x="28.4" y="105.4" width="4.5" height="1.2"/><rect x="34.1" y="105.4" width="3.6" height="1.2"/><rect x="39.2" y="105.4" width="5.4" height="1.2"/><rect x="45.7" y="105.4" width="3.2" height="1.2"/></g>
<g fill="#555" opacity="1"><rect x="21.0" y="108.9" width="7.0" height="1.2"/><rect x="29.1" y="108.9" width="5.4" height="1.2"/><rect x="35.6" y="108.9" width="7.0" height="1.2"/></g>
<g fill="#555" opacity="1"><rect x="21.0" y="112.5" width="2.7" height="1.2"/><rect x="24.7" y="112.5" width="7.9" height="1.2"/><rect x="34.0" y="112.5" width="8.1" height="1.2"/><rect x="43.7" y="112.5" width="2.3" height="1.2"/></g>
<g fill="#555" opacity="1"><rect x="120.0" y="45.0" width="4.3" height="1.2"/><rect x="125.5" y="45.0" width="2.5" height="1.2"/><rect x="129.2" y="45.0" width="8.7" height="1.2"/><rect x="138.8" y="45.0" width="4.7" height="1.2"/></g>
<g fill="#555" opacity="1"><rect x="120.0" y="48.6" width="6.5" height="1.2"/></g>
<g fill="#555" opacity="1"><rect x="118.0" y="52.1" width="6.1" height="1.2"/><rect x="125.0" y="52.1" width="3.6" height="1.2"/><rect x="130.2" y="52.1" width="3.5" height="1.2"/><rect x="135.0" y="52.1" width="4.9" height="1.2"/></g>
<g fill="#555" opacity="1"><rect x="120.0" y="55.7" width="3.3" height="1.2"/><rect x="124.3" y="55.7" width="2.6" height="1.2"/><rect x="128.4" y="55.7" width="2.8" height="1.2"/><rect x="132.1" y="55.7" width="6.8" height="1.2"/></g>
<g fill="#555" opacity="1"><rect x="120.0" y="59.2" width="2.6" height="1.2"/><rect x="123.8" y="59.2" width="3.6" height="1.2"/><rect x="128.9" y="59.2" width="6.3" height="1.2"/><rect x="136.5" y="59.2" width="7.3" height="1.2"/><rect x="145.4" y="59.2" width="2.1" height="1.2"/></g>
<g fill="#555" opacity="1"><rect x="118.0" y="62.8" width="2.8" height="1.2"/><rect x="122.3" y="62.8" width="6.2" height="1.2"/><rect x="129.9" y="62.8" width="3.4" height="1.2"/><rect x="134.6" y="62.8" width="2.1" height="1.2"/></g>
<g fill="#555" opacity="1"><rect x="120.0" y="66.3" width="4.4" height="1.2"/><rect x="125.7" y="66.3" width="2.2" height="1.2"/></g>
<g fill="#555" opacity="1"><rect x="120.0" y="69.9" width="5.0" height="1.2"/><rect x="126.3" y="69.9" width="6.2" height="1.2"/><rect x="133.6" y="69.9" width="4.5" height="1.2"/><rect x="139.7" y="69.9" width="4.0" height="1.2"/></g>
<g fill="#555" opacity="1"><rect x="118.0" y="73.4" width="3.5" height="1.2"/><rect x="122.5" y="73.4" width="5.5" height="1.2"/></g>
<g fill="#555" opacity="1"><rect x="120.0" y="77.0" width="8.9" height="1.2"/><rect x="130.2" y="77.0" width="8.5" height="1.2"/><rect x="140.0" y="77.0" width="4.9" height="1.2"/></g>
<g fill="#555" opacity="1"><rect x="120.0" y="80.5" width="7.4" height="1.2"/><rect x="128.6" y="80.5" width="9.0" height="1.2"/></g>
<g fill="#555" opacity="1"><rect x="155.0" y="80.5" width="8.5" height="1.2"/><rect x="164.6" y="80.5" width="2.7" height="1.2"/><rect x="168.6" y="80.5" width="1.1" height="1.2"/></g>
<g fill="#555" opacity="1"><rect x="118.0" y="84.1" width="2.3" height="1.2"/><rect x="121.7" y="84.1" width="3.9" height="1.2"/><rect x="126.8" y="84.1" width="4.4" height="1.2"/><rect x="132.7" y="84.1" width="7.2" height="1.2"/></g>
<g fill="#555" opacity="1"><rect x="155.0" y="84.1" width="2.5" height="1.2"/><rect x="158.6" y="84.1" width="7.3" height="1.2"/><rect x="167.3" y="84.1" width="5.2" height="1.2"/></g>
<g fill="#555" opacity="1"><rect x="120.0" y="87.6" width="4.6" height="1.2"/><rect x="125.6" y="87.6" width="4.2" height="1.2"/><rect x="131.0" y="87.6" width="5.7" height="1.2"/><rect x="138.0" y="87.6" width="4.5" height="1.2"/><rect x="144.0" y="87.6" width="3.0" height="1.2"/></g>
<g fill="#555" opacity="1"><rect x="155.0" y="87.6" width="7.6" height="1.2"/><rect x="163.8" y="87.6" width="3.7" height="1.2"/><rect x="168.9" y="87.6" width="2.1" height="1.2"/><rect x="172.0" y="87.6" width="5.7" height="1.2"/><rect x="179.0" y="87.6" width="3.2" height="1.2"/></g>
<g fill="#555" opacity="1"><rect x="120.0" y="91.2" width="8.9" height="1.2"/><rect x="130.3" y="91.2" width="6.9" height="1.2"/></g>
<g fill="#555" opacity="1"><rect x="155.0" y="91.2" width="2.1" height="1.2"/><rect x="158.3" y="91.2" width="4.4" height="1.2"/><rect x="163.6" y="91.2" width="3.7" height="1.2"/></g>
<g fill="#555" opacity="1"><rect x="118.0" y="94.7" width="3.7" height="1.2"/><rect x="123.2" y="94.7" width="4.9" height="1.2"/><rect x="129.2" y="94.7" width="2.3" height="1.2"/></g>
<g fill="#555" opacity="1"><rect x="155.0" y="94.7" width="7.7" height="1.2"/><rect x="163.7" y="94.7" width="2.9" height="1.2"/><rect x="168.1" y="94.7" width="7.5" height="1.2"/><rect x="176.9" y="94.7" width="7.1" height="1.2"/></g>
<g fill="#555" opacity="1"><rect x="155.0" y="98.3" width="3.2" height="1.2"/><rect x="159.1" y="98.3" width="6.5" height="1.2"/><rect x="167.1" y="98.3" width="2.3" height="1.2"/></g>
<g fill="#555" opacity="1"><rect x="155.0" y="101.8" width="8.5" height="1.2"/><rect x="165.0" y="101.8" width="6.2" height="1.2"/><rect x="172.4" y="101.8" width="5.6" height="1.2"/></g>
<g fill="#555" opacity="1"><rect x="155.0" y="105.4" width="6.8" height="1.2"/><rect x="163.4" y="105.4" width="3.8" height="1.2"/></g>
<g fill="#555" opacity="1"><rect x="155.0" y="108.9" width="5.2" height="1.2"/><rect x="161.6" y="108.9" width="5.2" height="1.2"/><rect x="168.4" y="108.9" width="2.7" height="1.2"/></g>
<g fill="#555" opacity="1"><rect x="155.0" y="112.5" width="4.9" height="1.2"/><rect x="161.4" y="112.5" width="7.8" height="1.2"/><rect x="170.7" y="112.5" width="4.3" height="1.2"/></g>
<g fill="#9a9" opacity="0.8"><rect x="57.0" y="45.0" width="2.8" height="1.3"/><rect x="60.8" y="45.0" width="7.5" height="1.3"/><rect x="69.7" y="45.0" width="3.9" height="1.3"/><rect x="74.8" y="45.0" width="2.5" height="1.3"/><rect x="78.3" y="45.0" width="5.4" height="1.3"/><rect x="85.1" y="45.0" width="2.0" height="1.3"/></g>
<g fill="#999" opacity="0.8"><rect x="57.0" y="48.5" width="3.3" height="1.3"/><rect x="61.4" y="48.5" width="7.8" height="1.3"/><rect x="70.4" y="48.5" width="3.9" height="1.3"/><rect x="75.8" y="48.5" width="2.1" height="1.3"/></g>
<g fill="#999" opacity="0.8"><rect x="63.0" y="52.0" width="2.2" height="1.3"/><rect x="66.4" y="52.0" width="4.9" height="1.3"/><rect x="72.9" y="52.0" width="5.5" height="1.3"/><rect x="79.9" y="52.0" width="6.8" height="1.3"/></g>
<g fill="#c99" opacity="0.8"><rect x="63.0" y="55.5" width="7.9" height="1.3"/><rect x="72.2" y="55.5" width="4.8" height="1.3"/></g>
<g fill="#c99" opacity="0.8"><rect x="63.0" y="59.0" width="2.5" height="1.3"/><rect x="66.6" y="59.0" width="5.4" height="1.3"/><rect x="73.0" y="59.0" width="5.8" height="1.3"/><rect x="79.8" y="59.0" width="3.1" height="1.3"/></g>
<g fill="#c99" opacity="0.8"><rect x="63.0" y="62.5" width="3.2" height="1.3"/><rect x="67.8" y="62.5" width="6.7" height="1.3"/><rect x="75.9" y="62.5" width="2.1" height="1.3"/></g>
<g fill="#888" opacity="0.8"><rect x="63.0" y="66.0" width="4.2" height="1.3"/><rect x="68.5" y="66.0" width="2.9" height="1.3"/><rect x="72.4" y="66.0" width="5.7" height="1.3"/><rect x="79.1" y="66.0" width="3.5" height="1.3"/><rect x="84.1" y="66.0" width="5.0" height="1.3"/><rect x="90.1" y="66.0" width="2.2" height="1.3"/><rect x="93.3" y="66.0" width="2.8" height="1.3"/><rect x="97.2" y="66.0" width="2.4" height="1.3"/></g>
<g fill="#888" opacity="0.8"><rect x="67.0" y="69.5" width="2.1" height="1.3"/><rect x="70.2" y="69.5" width="3.0" height="1.3"/><rect x="74.4" y="69.5" width="2.5" height="1.3"/><rect x="78.2" y="69.5" width="8.3" height="1.3"/><rect x="87.4" y="69.5" width="7.9" height="1.3"/><rect x="96.6" y="69.5" width="1.6" height="1.3"/></g>
<g fill="#b5a050" opacity="0.8"><rect x="67.0" y="73.0" width="6.0" height="1.3"/><rect x="74.2" y="73.0" width="5.8" height="1.3"/><rect x="81.2" y="73.0" width="5.7" height="1.3"/><rect x="88.4" y="73.0" width="3.4" height="1.3"/><rect x="93.1" y="73.0" width="8.5" height="1.3"/><rect x="103.2" y="73.0" width="3.3" height="1.3"/></g>
<g fill="#888" opacity="0.8"><rect x="71.0" y="76.5" width="4.2" height="1.3"/><rect x="76.7" y="76.5" width="2.9" height="1.3"/><rect x="80.9" y="76.5" width="2.4" height="1.3"/><rect x="84.7" y="76.5" width="3.2" height="1.3"/><rect x="89.2" y="76.5" width="3.1" height="1.3"/><rect x="93.3" y="76.5" width="4.8" height="1.3"/><rect x="99.4" y="76.5" width="4.6" height="1.3"/><rect x="105.4" y="76.5" width="3.9" height="1.3"/></g>
<g fill="#999" opacity="0.8"><rect x="67.0" y="80.0" width="3.0" height="1.3"/><rect x="71.3" y="80.0" width="4.3" height="1.3"/><rect x="76.9" y="80.0" width="4.6" height="1.3"/><rect x="82.6" y="80.0" width="4.5" height="1.3"/><rect x="88.4" y="80.0" width="8.9" height="1.3"/></g>
<g fill="#999" opacity="0.8"><rect x="71.0" y="83.5" width="4.0" height="1.3"/><rect x="76.6" y="83.5" width="3.9" height="1.3"/><rect x="81.5" y="83.5" width="5.5" height="1.3"/><rect x="88.4" y="83.5" width="4.4" height="1.3"/><rect x="94.1" y="83.5" width="4.0" height="1.3"/><rect x="99.7" y="83.5" width="5.2" height="1.3"/><rect x="106.1" y="83.5" width="5.1" height="1.3"/></g>
<g fill="#9a9" opacity="0.8"><rect x="67.0" y="87.0" width="5.6" height="1.3"/><rect x="74.2" y="87.0" width="2.4" height="1.3"/><rect x="77.8" y="87.0" width="5.8" height="1.3"/><rect x="85.0" y="87.0" width="4.0" height="1.3"/><rect x="90.1" y="87.0" width="4.7" height="1.3"/><rect x="95.8" y="87.0" width="2.5" height="1.3"/><rect x="99.6" y="87.0" width="2.4" height="1.3"/><rect x="103.2" y="87.0" width="2.8" height="1.3"/><rect x="107.5" y="87.0" width="4.1" height="1.3"/></g>
<g fill="#999" opacity="0.8"><rect x="71.0" y="90.5" width="5.5" height="1.3"/><rect x="77.7" y="90.5" width="3.7" height="1.3"/></g>
<g fill="#3a3a3a" opacity="1"><rect x="20.6" y="121.0" width="8.1" height="1.9"/><rect x="30.0" y="121.0" width="3.0" height="1.9"/><rect x="34.1" y="121.0" width="4.6" height="1.9"/><rect x="40.0" y="121.0" width="3.0" height="1.9"/><rect x="44.0" y="121.0" width="4.2" height="1.9"/><rect x="49.3" y="121.0" width="2.2" height="1.9"/><rect x="52.8" y="121.0" width="8.4" height="1.9"/><rect x="62.5" y="121.0" width="7.2" height="1.9"/><rect x="71.2" y="121.0" width="7.9" height="1.9"/><rect x="80.6" y="121.0" width="5.1" height="1.9"/><rect x="87.0" y="121.0" width="2.8" height="1.9"/><rect x="91.4" y="121.0" width="4.6" height="1.9"/><rect x="97.3" y="121.0" width="8.2" height="1.9"/><rect x="106.6" y="121.0" width="3.3" height="1.9"/><rect x="111.4" y="121.0" width="6.2" height="1.9"/><rect x="118.6" y="121.0" width="2.2" height="1.9"/><rect x="121.9" y="121.0" width="2.1" height="1.9"/><rect x="125.4" y="121.0" width="3.3" height="1.9"/><rect x="129.8" y="121.0" width="4.7" height="1.9"/><rect x="135.8" y="121.0" width="5.0" height="1.9"/><rect x="142.2" y="121.0" width="6.6" height="1.9"/><rect x="150.0" y="121.0" width="2.7" height="1.9"/><rect x="154.3" y="121.0" width="6.8" height="1.9"/><rect x="162.1" y="121.0" width="2.9" height="1.9"/></g>
<g fill="#4a4a4a" opacity="1"><rect x="20.6" y="126.5" width="8.9" height="1.6"/><rect x="30.5" y="126.5" width="2.1" height="1.6"/><rect x="33.8" y="126.5" width="5.0" height="1.6"/><rect x="40.3" y="126.5" width="7.8" height="1.6"/><rect x="49.2" y="126.5" width="4.9" height="1.6"/><rect x="55.4" y="126.5" width="8.2" height="1.6"/><rect x="64.7" y="126.5" width="4.7" height="1.6"/><rect x="70.4" y="126.5" width="6.5" height="1.6"/><rect x="77.8" y="126.5" width="8.5" height="1.6"/><rect x="87.6" y="126.5" width="6.0" height="1.6"/><rect x="94.6" y="126.5" width="3.6" height="1.6"/><rect x="99.4" y="126.5" width="8.0" height="1.6"/><rect x="108.7" y="126.5" width="4.0" height="1.6"/><rect x="114.3" y="126.5" width="6.6" height="1.6"/><rect x="122.2" y="126.5" width="3.4" height="1.6"/><rect x="126.7" y="126.5" width="8.3" height="1.6"/><rect x="136.0" y="126.5" width="5.7" height="1.6"/><rect x="143.0" y="126.5" width="4.5" height="1.6"/><rect x="149.0" y="126.5" width="8.4" height="1.6"/><rect x="158.8" y="126.5" width="7.2" height="1.6"/><rect x="167.0" y="126.5" width="2.4" height="1.6"/><rect x="170.7" y="126.5" width="4.2" height="1.6"/><rect x="175.9" y="126.5" width="8.1" height="1.6"/><rect x="185.0" y="126.5" width="1.4" height="1.6"/></g>
<g fill="#4a4a4a" opacity="1"><rect x="20.6" y="131.1" width="2.8" height="1.6"/><rect x="25.0" y="131.1" width="4.8" height="1.6"/><rect x="30.8" y="131.1" width="3.3" height="1.6"/><rect x="35.0" y="131.1" width="5.5" height="1.6"/><rect x="41.7" y="131.1" width="8.0" height="1.6"/><rect x="51.1" y="131.1" width="2.4" height="1.6"/><rect x="54.7" y="131.1" width="4.7" height="1.6"/><rect x="60.5" y="131.1" width="3.8" height="1.6"/><rect x="65.3" y="131.1" width="6.9" height="1.6"/><rect x="73.3" y="131.1" width="2.8" height="1.6"/><rect x="77.1" y="131.1" width="5.1" height="1.6"/><rect x="83.5" y="131.1" width="3.7" height="1.6"/><rect x="88.6" y="131.1" width="3.5" height="1.6"/><rect x="93.5" y="131.1" width="6.3" height="1.6"/><rect x="100.8" y="131.1" width="7.3" height="1.6"/><rect x="109.2" y="131.1" width="5.8" height="1.6"/><rect x="116.3" y="131.1" width="6.4" height="1.6"/><rect x="123.9" y="131.1" width="2.4" height="1.6"/><rect x="127.8" y="131.1" width="8.0" height="1.6"/><rect x="137.0" y="131.1" width="6.1" height="1.6"/><rect x="144.2" y="131.1" width="8.3" height="1.6"/><rect x="153.9" y="131.1" width="3.6" height="1.6"/><rect x="158.9" y="131.1" width="8.9" height="1.6"/><rect x="168.9" y="131.1" width="9.0" height="1.6"/><rect x="179.1" y="131.1" width="3.3" height="1.6"/><rect x="183.8" y="131.1" width="2.6" height="1.6"/></g>
<g fill="#4a4a4a" opacity="1"><rect x="20.6" y="135.7" width="6.1" height="1.6"/><rect x="27.7" y="135.7" width="5.7" height="1.6"/><rect x="34.9" y="135.7" width="5.3" height="1.6"/><rect x="41.5" y="135.7" width="8.0" height="1.6"/><rect x="50.7" y="135.7" width="5.4" height="1.6"/><rect x="57.5" y="135.7" width="7.8" height="1.6"/><rect x="66.3" y="135.7" width="2.7" height="1.6"/><rect x="70.4" y="135.7" width="5.9" height="1.6"/><rect x="77.4" y="135.7" width="8.2" height="1.6"/><rect x="87.1" y="135.7" width="5.8" height="1.6"/><rect x="94.5" y="135.7" width="7.9" height="1.6"/><rect x="103.8" y="135.7" width="4.0" height="1.6"/><rect x="108.7" y="135.7" width="6.8" height="1.6"/><rect x="116.9" y="135.7" width="4.5" height="1.6"/><rect x="122.6" y="135.7" width="6.0" height="1.6"/><rect x="129.6" y="135.7" width="6.9" height="1.6"/><rect x="137.8" y="135.7" width="4.7" height="1.6"/><rect x="143.5" y="135.7" width="5.9" height="1.6"/><rect x="150.5" y="135.7" width="7.1" height="1.6"/><rect x="158.6" y="135.7" width="4.8" height="1.6"/><rect x="164.4" y="135.7" width="4.9" height="1.6"/><rect x="170.5" y="135.7" width="2.7" height="1.6"/><rect x="174.2" y="135.7" width="5.4" height="1.6"/><rect x="180.6" y="135.7" width="5.5" height="1.6"/></g>
<g fill="#4a4a4a" opacity="1"><rect x="20.6" y="140.3" width="2.7" height="1.6"/><rect x="24.6" y="140.3" width="8.5" height="1.6"/><rect x="34.6" y="140.3" width="5.6" height="1.6"/><rect x="41.3" y="140.3" width="2.5" height="1.6"/><rect x="44.9" y="140.3" width="4.2" height="1.6"/><rect x="50.7" y="140.3" width="2.8" height="1.6"/><rect x="55.0" y="140.3" width="5.3" height="1.6"/><rect x="61.6" y="140.3" width="3.8" height="1.6"/><rect x="67.0" y="140.3" width="3.3" height="1.6"/><rect x="71.6" y="140.3" width="5.6" height="1.6"/><rect x="78.2" y="140.3" width="3.6" height="1.6"/><rect x="83.4" y="140.3" width="7.5" height="1.6"/><rect x="92.3" y="140.3" width="8.3" height="1.6"/><rect x="101.6" y="140.3" width="6.9" height="1.6"/><rect x="109.9" y="140.3" width="3.6" height="1.6"/><rect x="114.7" y="140.3" width="8.8" height="1.6"/><rect x="124.7" y="140.3" width="7.3" height="1.6"/><rect x="133.0" y="140.3" width="6.7" height="1.6"/><rect x="140.8" y="140.3" width="5.6" height="1.6"/><rect x="147.5" y="140.3" width="8.1" height="1.6"/><rect x="157.0" y="140.3" width="5.5" height="1.6"/><rect x="163.9" y="140.3" width="5.0" height="1.6"/><rect x="170.4" y="140.3" width="3.8" height="1.6"/><rect x="175.5" y="140.3" width="6.1" height="1.6"/><rect x="182.8" y="140.3" width="2.3" height="1.6"/></g>
<g fill="#4a4a4a" opacity="1"><rect x="20.6" y="144.9" width="7.3" height="1.6"/><rect x="29.2" y="144.9" width="8.7" height="1.6"/><rect x="39.3" y="144.9" width="7.1" height="1.6"/><rect x="47.6" y="144.9" width="2.3" height="1.6"/><rect x="51.2" y="144.9" width="7.2" height="1.6"/><rect x="59.9" y="144.9" width="3.4" height="1.6"/><rect x="64.4" y="144.9" width="8.9" height="1.6"/><rect x="74.6" y="144.9" width="5.4" height="1.6"/><rect x="81.5" y="144.9" width="3.0" height="1.6"/><rect x="85.8" y="144.9" width="6.7" height="1.6"/><rect x="93.8" y="144.9" width="3.1" height="1.6"/><rect x="97.9" y="144.9" width="6.4" height="1.6"/><rect x="105.8" y="144.9" width="3.0" height="1.6"/><rect x="109.7" y="144.9" width="2.6" height="1.6"/><rect x="113.7" y="144.9" width="4.7" height="1.6"/><rect x="119.7" y="144.9" width="9.0" height="1.6"/><rect x="129.9" y="144.9" width="3.8" height="1.6"/><rect x="135.2" y="144.9" width="2.0" height="1.6"/><rect x="138.3" y="144.9" width="6.9" height="1.6"/><rect x="146.2" y="144.9" width="2.2" height="1.6"/><rect x="149.7" y="144.9" width="4.3" height="1.6"/><rect x="155.6" y="144.9" width="2.7" height="1.6"/><rect x="159.7" y="144.9" width="4.7" height="1.6"/></g>
<rect x="151" y="140" width="2" height="3" fill="#e33"/><rect x="36" y="149.5" width="2" height="3" fill="#e33"/>
<g fill="#3a3a3a" opacity="1"><rect x="20.6" y="150.6" width="4.3" height="1.2"/><rect x="25.9" y="150.6" width="5.2" height="1.2"/><rect x="32.6" y="150.6" width="4.4" height="1.2"/><rect x="38.0" y="150.6" width="4.9" height="1.2"/><rect x="43.9" y="150.6" width="4.2" height="1.2"/><rect x="49.4" y="150.6" width="5.8" height="1.2"/><rect x="56.6" y="150.6" width="4.0" height="1.2"/><rect x="61.5" y="150.6" width="2.2" height="1.2"/><rect x="64.8" y="150.6" width="3.4" height="1.2"/></g>
<g fill="#3a3a3a" opacity="1"><rect x="73.0" y="150.6" width="6.2" height="1.2"/><rect x="80.6" y="150.6" width="7.1" height="1.2"/><rect x="89.0" y="150.6" width="5.0" height="1.2"/><rect x="95.1" y="150.6" width="2.4" height="1.2"/><rect x="99.0" y="150.6" width="5.5" height="1.2"/><rect x="105.5" y="150.6" width="8.5" height="1.2"/><rect x="115.2" y="150.6" width="6.4" height="1.2"/><rect x="122.8" y="150.6" width="2.9" height="1.2"/><rect x="127.3" y="150.6" width="3.2" height="1.2"/><rect x="131.6" y="150.6" width="9.0" height="1.2"/><rect x="141.6" y="150.6" width="5.5" height="1.2"/><rect x="148.4" y="150.6" width="3.7" height="1.2"/><rect x="153.6" y="150.6" width="1.4" height="1.2"/></g>
<g fill="#4a4a4a" opacity="1"><rect x="20.6" y="154.6" width="5.3" height="1.3"/><rect x="26.8" y="154.6" width="7.0" height="1.3"/><rect x="35.3" y="154.6" width="8.3" height="1.3"/><rect x="44.6" y="154.6" width="5.4" height="1.3"/></g>
<g fill="#4a4a4a" opacity="1"><rect x="96.0" y="154.6" width="5.3" height="1.3"/><rect x="102.4" y="154.6" width="4.1" height="1.3"/><rect x="107.5" y="154.6" width="6.4" height="1.3"/><rect x="114.9" y="154.6" width="8.7" height="1.3"/><rect x="124.6" y="154.6" width="8.7" height="1.3"/><rect x="134.4" y="154.6" width="2.6" height="1.3"/><rect x="138.4" y="154.6" width="5.7" height="1.3"/></g>
</svg></div></div>
<div class="card" style="left:879px;top:282px"><div class="t">Which factor makes<br>python language quite<br>&amp; easy?</div><div class="img" style="top:70px;background:#c9d7e4"><svg width="207" height="136" viewBox="0 0 207 136" font-family="Liberation Sans">
<defs>
<linearGradient id="g4" x1="0" y1="0" x2="0" y2="1"><stop offset="0" stop-color="#d3dfea"/><stop offset="1" stop-color="#bccbd9"/></linearGradient>
<radialGradient id="rf" cx=".4" cy=".3" r=".8"><stop offset="0" stop-color="#ff2a2a"/><stop offset="1" stop-color="#b80000"/></radialGradient>
<radialGradient id="wf" cx=".4" cy=".3" r=".8"><stop offset="0" stop-color="#fff"/><stop offset="1" stop-color="#bdbdbd"/></radialGradient>
</defs>
<rect width="207" height="136" fill="url(#g4)"/>
<g fill="#f4f6f8">
<path d="M0 19 L23.5 12.7 L62.7 36 L26.7 59.7 L0 55Z"/>
<path d="M0 80 L26.7 78.5 L58 99 L29.8 122.5 L0 116Z"/>
<path d="M69 52 L102 47 L128.6 69 L100.4 92.7 L75 88Z"/>
<path d="M70 108 L100 105 L112 128 L90 136 L70 136Z"/>
</g>
<g fill="#e2e7ec"><path d="M0 37 L62 37 L26.7 59.7 L0 55Z"/><path d="M0 98 L58 99 L29.8 122.5 L0 116Z"/><path d="M74 70 L128 69 L100.4 92.7 L75 88Z"/></g>
<path d="M136 78 L169 72 L207 90 L207 106 L173.5 134 L137.6 106Z" fill="#f47070"/>
<path d="M137.6 106 L207 106 L173.5 134Z" fill="#f58080"/><path d="M137.6 106 H207" stroke="#e05a5a" stroke-width=".7"/>
<g stroke="#c9c9c9" stroke-width="2.2" fill="none">
<path d="M49 57 L17 136 M57 57 L35 136"/>
<path d="M73 57 L68 136 M85 57 L84 136"/>
<path d="M105 57 L103 136 M125 57 L147 136"/>
</g>
<g stroke="#c9c9c9" stroke-width="1.6">
<path d="M46 66 L55 66 M42 76 L52 76 M38 86 L49 86 M34 96 L46 96 M30 106 L43 106 M26 116 L40 116 M22 126 L37 126"/>
<path d="M72 67 L85 67 M71 78 L85 78 M71 89 L85 89 M70 100 L84 100 M70 111 L84 111 M69 122 L84 122"/>
<path d="M105 66 L127 66 M104 78 L130 78 M104 90 L134 90 M104 102 L137 102 M103 114 L140 114 M103 126 L143 126"/>
</g>
<g fill="url(#rf)">
<circle cx="66" cy="75" r="9.5"/>
<path d="M57 84 Q66 80 80 83 Q85 85 82 88 L74 89 L75 104 L78 116 L75 124 L70 118 L68 106 L63 112 L60 127 L55 127 L57 106 L54 96 Q53 88 57 84Z"/>
</g>
<g fill="url(#wf)">
<circle cx="29" cy="113" r="9.5"/>
<path d="M15 136 Q16 122 28 121 Q40 122 40 136Z"/>
<path d="M15 128 L5 136 L13 136Z"/>
<circle cx="107" cy="116" r="12"/>
<path d="M95 136 Q95 124 110 126 L134 117 Q141 114 140 120 L124 133 L123 136Z"/>
</g>
<g transform="translate(44,17)">
<path d="M11 0 Q6 5 10 10 Q13 14 9 17 Q16 13 12 8 Q9 4 11 0Z" fill="#d9452b"/>
<path d="M15 3 Q11 6 14 10 Q16 13 13 16 Q18 12 16 9 Q14 6 15 3Z" fill="#d9452b"/>
<ellipse cx="11" cy="20" rx="9" ry="2" fill="none" stroke="#4a6fa0" stroke-width="1.2"/>
<ellipse cx="11" cy="23.5" rx="7" ry="1.6" fill="none" stroke="#4a6fa0" stroke-width="1.1"/>
<path d="M3 26 Q11 29 19 26" fill="none" stroke="#4a6fa0" stroke-width="1.1"/>
<text x="1" y="36" font-size="9" font-weight="bold" fill="#d9452b" textLength="18">Java</text>
</g>
<g transform="translate(70,13) scale(0.245)">
<path d="M48 0 C23 0 25 11 25 11 V22 H49 V26 H15 C15 26 0 24 0 49 C0 74 13 73 13 73 H21 V61 C21 61 20 48 34 48 H58 C58 48 71 48 71 36 V12 C71 12 73 0 48 0Z" fill="#3a8ec8"/>
<path d="M50 98 C75 98 73 87 73 87 V76 H49 V72 H83 C83 72 98 74 98 49 C98 24 85 25 85 25 H77 V37 C77 37 78 50 64 50 H40 C40 50 27 50 27 62 V86 C27 86 25 98 50 98Z" fill="#f5c02a"/>
</g>
<g fill="#e0201c"><path d="M95 36 L103 35 V38 L95 39Z"/><path d="M95 40 L103 39 V42.5 L95 43.5Z"/><path d="M95 44.5 L103 43.5 V47 L95 48Z"/></g>
<text x="104.5" y="47" font-size="12.5" font-weight="bold" fill="#111" textLength="34">Scala</text>
</svg></div></div>
<div class="card" style="left:1114px;top:282px"><div class="t">Python popularity<br>over Ruby – Is it real<br>or myth?</div><div class="img" style="top:70px;background:#77c3d8"><svg width="207" height="136" viewBox="0 0 207 136" font-family="Liberation Sans">
<defs>
<linearGradient id="g5" x1="0" y1="0" x2="1" y2="1"><stop offset="0" stop-color="#84d0e3"/><stop offset="1" stop-color="#74c4d9"/></linearGradient>
<linearGradient id="g5b" x1="0" y1="0" x2="0" y2="1"><stop offset="0" stop-color="#62b2cb"/><stop offset="1" stop-color="#70bdd4"/></linearGradient>
<filter id="bl5"><feGaussianBlur stdDeviation="4"/></filter>
</defs>
<rect width="207" height="136" fill="url(#g5)"/>
<path d="M40 100 Q90 70 140 52 Q170 44 207 50 V136 H40Z" fill="url(#g5b)" filter="url(#bl5)" opacity=".9"/>
<path d="M180 0 L207 0 L207 15Z" fill="#8cc9c0" opacity=".6" filter="url(#bl5)"/>
<text x="-9" y="27" font-family="Liberation Serif" font-weight="bold" font-size="19" fill="#c6e2e8" stroke="#6a8a94" stroke-width=".6">SYS</text>
<text x="123" y="65.7" font-size="20.5" fill="#2a2a2a" textLength="83">Python is</text>
<text x="113" y="92.6" font-size="20.5" fill="#2a2a2a" textLength="95">coding lan</text>
<circle cx="9" cy="86" r="10" fill="#8fae7f"/>
<circle cx="28" cy="85.6" r="9" fill="#a8d8ef"/>
<circle cx="56" cy="91" r="6" fill="#8ad6ec"/>
<circle cx="64" cy="105" r="10" fill="#f0c878"/>
<circle cx="45.5" cy="85.6" r="6" fill="#e8913a"/>
<circle cx="40" cy="79" r="3.5" fill="#f090c0"/>
<circle cx="35" cy="74" r="3" fill="#9ad8e8"/><circle cx="29" cy="74" r="2" fill="#f0d040"/><circle cx="24.5" cy="75" r="1.6" fill="#7a5ab0"/>
<circle cx="42" cy="102" r="12" fill="#b05ad0"/>
<circle cx="52" cy="122" r="15" fill="#9ccc4a"/>
<circle cx="18" cy="116" r="20" fill="#8b3a12"/>
<g fill="#f4f4f4" font-size="3.5" text-anchor="middle"><text x="12" y="122">C#</text><text x="12" y="128">7.4%</text><text x="52" y="122">Go</text><text x="52" y="127">2.5%</text><text x="42" y="101">Haskell</text><text x="42" y="106">1.5%</text><text x="28" y="84">Perl</text><text x="28" y="89">1.5%</text></g>
</svg></div></div>
<div class="card" style="left:173px;top:517px"><div class="t">Why makes Python<br>amongst than other<br>programming<br>languages?</div><div class="img" style="top:91px;background:#ccc"><svg width="207" height="115" viewBox="0 0 207 115" font-family="Liberation Sans">
<defs>
<linearGradient id="g6a" x1="0" y1="0" x2="1" y2="1"><stop offset="0" stop-color="#4a4a4a"/><stop offset=".6" stop-color="#9a9a9a"/><stop offset="1" stop-color="#b8b8b8"/></linearGradient>
<linearGradient id="g6b" x1="0" y1="0" x2="0" y2="1"><stop offset="0" stop-color="#3f7fd0"/><stop offset=".6" stop-color="#a8c4e4"/><stop offset="1" stop-color="#5c8cd0"/></linearGradient>
<linearGradient id="g6c" x1="0" y1="0" x2="0" y2="1"><stop offset="0" stop-color="#5a5a5a"/><stop offset="1" stop-color="#9a9a9a"/></linearGradient>
</defs>
<rect width="207" height="115" fill="#e6e6e6"/>
<rect x="6" y="0" width="128" height="31" fill="#262626"/>
<rect x="6" y="0" width="128" height="5" fill="url(#g6c)"/>
<path d="M22 0 L40 5 L60 5 Z" fill="#222"/>
<rect x="10" y="9.8" width="120" height="2.2" fill="#d8d8d8"/>
<g fill="#8a8a8a"><rect x="10" y="15.5" width="115" height="1.3"/><rect x="10" y="19.5" width="117" height="1.3"/><rect x="10" y="23.5" width="15" height="1.3"/></g>
<rect x="6" y="37" width="61" height="78" fill="#fff"/>
<rect x="6" y="37" width="61" height="38" fill="url(#g6a)"/>
<path d="M10 42 L20 47 L20 62 L10 57Z" fill="#111"/>
<g fill="#bbb" opacity=".6"><rect x="28" y="47" width="3" height="10"/><rect x="33" y="49" width="2" height="8"/></g>
<g fill="#333"><rect x="11" y="79.5" width="42" height="2"/><rect x="11" y="84.5" width="45" height="2"/><rect x="11" y="89.5" width="22" height="2"/></g>
<g fill="#ddd"><rect x="12" y="96" width="12" height="3"/><rect x="26" y="96" width="12" height="3"/><rect x="40" y="96" width="12" height="3"/><rect x="12" y="101" width="9" height="3"/></g>
<g fill="#3b5998"><rect x="13" y="96.7" width="2" height="1.6"/></g><g fill="#d44"><rect x="41" y="96.7" width="2" height="1.6"/><rect x="13" y="101.7" width="2" height="1.6"/></g>
<rect x="73" y="37" width="62" height="78" fill="#fff"/>
<rect x="73" y="37" width="62" height="40" fill="url(#g6b)"/>
<ellipse cx="118" cy="46" rx="16" ry="7" fill="#e8eef4" opacity=".85"/>
<ellipse cx="84" cy="70" rx="12" ry="5" fill="#d8e2ee" opacity=".7"/>
<rect x="91" y="64" width="2" height="12" fill="#333"/><rect x="122" y="69" width="2" height="8" fill="#333"/>
<path d="M76 50 L135 65 L134 74 L76 58Z" fill="#2e6e48" stroke="#eee" stroke-width=".8"/>
<text x="80" y="57" font-size="7" font-weight="bold" fill="#f0f0f0" transform="rotate(14 80 57)" textLength="52">Digital Marketing</text>
<g fill="#333"><rect x="78" y="82" width="48" height="2"/><rect x="78" y="86.5" width="40" height="2"/></g>
<g fill="#ddd"><rect x="79" y="93" width="11" height="3"/><rect x="93" y="93" width="11" height="3"/><rect x="107" y="93" width="10" height="3"/><rect x="79" y="98" width="9" height="3"/></g>
<g fill="#aaa"><rect x="78" y="107" width="48" height="1.3"/></g>
<rect x="141" y="0" width="60" height="6" fill="#fff"/>
<rect x="141" y="11" width="60" height="72" fill="#fff"/>
<rect x="141" y="11" width="60" height="7" fill="#2c3338"/>
<rect x="143" y="13.8" width="10" height="1.3" fill="#ccc"/>
<g fill="#aaa"><rect x="143" y="21.5" width="54" height="1.2"/><rect x="143" y="24.5" width="18" height="1.2"/><rect x="143" y="29.5" width="45" height="1.2"/><rect x="143" y="32.5" width="14" height="1.2"/><rect x="143" y="37.5" width="53" height="1.2"/><rect x="143" y="40.5" width="22" height="1.2"/><rect x="143" y="45.5" width="40" height="1.2"/><rect x="143" y="48.5" width="16" height="1.2"/><rect x="143" y="53.5" width="52" height="1.2"/><rect x="143" y="56.5" width="40" height="1.2"/><rect x="143" y="61.5" width="52" height="1.2"/><rect x="143" y="64.5" width="18" height="1.2"/><rect x="143" y="69" width="52" height="1.2"/><rect x="143" y="73.5" width="48" height="1.2"/><rect x="143" y="76.5" width="16" height="1.2"/></g>
<rect x="141" y="88" width="60" height="16" fill="#fff"/>
<rect x="141" y="109" width="52" height="6" fill="#2c3338"/>
<rect x="192" y="103" width="15" height="12" fill="#f9f9f9" stroke="#ddd" stroke-width=".5"/>
<path d="M196 112 Q196 106 200 106 Q204 106 204 110" fill="none" stroke="#4a7cd0" stroke-width="1.5"/>
</svg></div></div>
<div class="card" style="left:408px;top:517px"><div class="t">How to Build AI Using<br>Python?</div><div class="img" style="top:50px;background:#020210"><svg width="207" height="156" viewBox="0 0 207 156">
<defs>
<linearGradient id="f7" x1="0" y1="0" x2="1" y2=".3"><stop offset="0" stop-color="#2a4ee0"/><stop offset=".35" stop-color="#1a34a8"/><stop offset="1" stop-color="#0a165a"/></linearGradient>
<linearGradient id="ft7" x1="0" y1="0" x2="0" y2="1"><stop offset="0" stop-color="#01020b" stop-opacity=".85"/><stop offset=".4" stop-color="#01020b" stop-opacity=".0"/><stop offset="1" stop-color="#01020b" stop-opacity=".2"/></linearGradient>
<radialGradient id="tl7" cx="0" cy="0" r=".6"><stop offset="0" stop-color="#081050"/><stop offset="1" stop-color="#01020c" stop-opacity="0"/></radialGradient>
<filter id="bl7"><feGaussianBlur stdDeviation="1.3"/></filter>
</defs>
<rect width="207" height="156" fill="#01020b"/>
<rect width="90" height="70" fill="url(#tl7)"/>
<path d="M166 23 Q180 17 207 20 V128 Q190 131 177 125 Q170 117 166 106.6 Q158 96 155 88 Q151 78 150 69.6 Q146 64 144 58.5 Q143 48 146 42 Q150 33 166 23Z" fill="url(#f7)" filter="url(#bl7)"/>
<path d="M166 23 Q180 17 207 20 V128 Q190 131 177 125 Q170 117 166 106.6 Q158 96 155 88 Q151 78 150 69.6 Q146 64 144 58.5 Q143 48 146 42 Q150 33 166 23Z" fill="url(#ft7)"/>
<ellipse cx="172" cy="62" rx="10" ry="5" fill="#050c40" opacity=".7" filter="url(#bl7)"/>
<ellipse cx="178" cy="89" rx="6" ry="4" fill="#050c40" opacity=".7" filter="url(#bl7)"/>
<ellipse cx="200" cy="66" rx="9" ry="10" fill="#081050" opacity=".6" filter="url(#bl7)"/>
<path d="M109 156 Q116 136 142 134 Q168 136 176 156Z" fill="#0a1a6a" filter="url(#bl7)"/>
<path d="M180 134 Q192 128 207 131 V156 H184Z" fill="#08124a" filter="url(#bl7)"/>
<circle cx="170.3" cy="80.5" r="0.48" fill="#6a9cff" opacity="0.82"/><circle cx="171.9" cy="86.8" r="0.34" fill="#9ad0ff" opacity="0.52"/><circle cx="186.5" cy="19.9" r="0.69" fill="#6a9cff" opacity="0.71"/><circle cx="181.2" cy="33.4" r="0.63" fill="#7fd08a" opacity="0.38"/><circle cx="180.2" cy="106.0" r="0.48" fill="#c8e8a0" opacity="0.81"/><circle cx="174.8" cy="89.9" r="0.30" fill="#6a9cff" opacity="0.40"/><circle cx="183.9" cy="62.6" r="0.70" fill="#a0e0c0" opacity="0.81"/><circle cx="187.4" cy="51.9" r="0.51" fill="#9ad0ff" opacity="0.37"/><circle cx="177.7" cy="27.6" r="0.64" fill="#7fd08a" opacity="0.56"/><circle cx="204.2" cy="114.1" r="0.39" fill="#7fd08a" opacity="0.86"/><circle cx="187.5" cy="64.1" r="0.55" fill="#a0e0c0" opacity="0.78"/><circle cx="190.8" cy="28.8" r="0.58" fill="#9ad0ff" opacity="0.36"/><circle cx="171.2" cy="72.0" r="0.38" fill="#a0e0c0" opacity="0.63"/><circle cx="206.0" cy="105.0" r="0.56" fill="#6a9cff" opacity="0.41"/><circle cx="168.2" cy="39.9" r="0.65" fill="#c8e8a0" opacity="0.89"/><circle cx="206.7" cy="85.4" r="0.34" fill="#a0e0c0" opacity="0.89"/><circle cx="154.3" cy="45.2" r="0.43" fill="#a0e0c0" opacity="0.51"/><circle cx="179.0" cy="43.4" r="0.45" fill="#a0e0c0" opacity="0.69"/><circle cx="195.8" cy="30.9" r="0.37" fill="#6a9cff" opacity="0.43"/><circle cx="200.9" cy="110.7" r="0.59" fill="#9ad0ff" opacity="0.44"/><circle cx="182.1" cy="79.8" r="0.65" fill="#6a9cff" opacity="0.68"/><circle cx="168.2" cy="27.1" r="0.50" fill="#7fd08a" opacity="0.49"/><circle cx="189.6" cy="60.8" r="0.63" fill="#6a9cff" opacity="0.68"/><circle cx="159.7" cy="35.5" r="0.35" fill="#7fd08a" opacity="0.61"/><circle cx="183.8" cy="87.1" r="0.41" fill="#7fd08a" opacity="0.85"/><circle cx="158.0" cy="67.1" r="0.32" fill="#7fd08a" opacity="0.51"/><circle cx="170.2" cy="53.7" r="0.53" fill="#a0e0c0" opacity="0.43"/><circle cx="201.0" cy="97.0" r="0.31" fill="#7fd08a" opacity="0.70"/><circle cx="172.3" cy="100.5" r="0.35" fill="#c8e8a0" opacity="0.39"/><circle cx="170.4" cy="58.0" r="0.66" fill="#7fd08a" opacity="0.76"/><circle cx="187.1" cy="107.8" r="0.44" fill="#c8e8a0" opacity="0.73"/><circle cx="200.4" cy="116.9" r="0.68" fill="#6a9cff" opacity="0.37"/><circle cx="184.4" cy="59.4" r="0.54" fill="#7fd08a" opacity="0.39"/><circle cx="198.9" cy="100.2" r="0.67" fill="#6a9cff" opacity="0.73"/><circle cx="170.7" cy="69.1" r="0.33" fill="#a0e0c0" opacity="0.76"/><circle cx="172.2" cy="41.9" r="0.50" fill="#7fd08a" opacity="0.69"/><circle cx="201.7" cy="44.9" r="0.45" fill="#7fd08a" opacity="0.43"/><circle cx="181.0" cy="75.7" r="0.56" fill="#c8e8a0" opacity="0.59"/><circle cx="199.7" cy="53.3" r="0.38" fill="#c8e8a0" opacity="0.59"/><circle cx="194.0" cy="122.0" r="0.45" fill="#9ad0ff" opacity="0.67"/><circle cx="161.2" cy="30.9" r="0.44" fill="#6a9cff" opacity="0.84"/><circle cx="205.7" cy="111.2" r="0.48" fill="#7fd08a" opacity="0.50"/><circle cx="154.3" cy="63.4" r="0.50" fill="#a0e0c0" opacity="0.52"/><circle cx="170.3" cy="23.7" r="0.41" fill="#7fd08a" opacity="0.68"/><circle cx="185.4" cy="47.9" r="0.42" fill="#c8e8a0" opacity="0.79"/><circle cx="195.6" cy="42.8" r="0.62" fill="#9ad0ff" opacity="0.89"/><circle cx="175.9" cy="89.9" r="0.68" fill="#c8e8a0" opacity="0.73"/><circle cx="153.4" cy="70.6" r="0.59" fill="#9ad0ff" opacity="0.77"/><circle cx="186.9" cy="41.2" r="0.67" fill="#6a9cff" opacity="0.75"/><circle cx="181.9" cy="121.5" r="0.52" fill="#6a9cff" opacity="0.71"/><circle cx="173.7" cy="110.9" r="0.49" fill="#c8e8a0" opacity="0.71"/><circle cx="194.8" cy="90.1" r="0.39" fill="#7fd08a" opacity="0.84"/><circle cx="176.0" cy="107.5" r="0.40" fill="#c8e8a0" opacity="0.75"/><circle cx="168.2" cy="47.2" r="0.39" fill="#7fd08a" opacity="0.83"/><circle cx="175.7" cy="95.3" r="0.49" fill="#9ad0ff" opacity="0.90"/><circle cx="200.3" cy="75.6" r="0.68" fill="#6a9cff" opacity="0.62"/><circle cx="203.6" cy="25.1" r="0.48" fill="#9ad0ff" opacity="0.66"/><circle cx="195.7" cy="80.7" r="0.51" fill="#9ad0ff" opacity="0.81"/><circle cx="177.5" cy="51.5" r="0.68" fill="#6a9cff" opacity="0.83"/><circle cx="180.8" cy="50.6" r="0.69" fill="#9ad0ff" opacity="0.64"/><circle cx="178.4" cy="38.5" r="0.35" fill="#a0e0c0" opacity="0.35"/><circle cx="165.3" cy="78.0" r="0.51" fill="#7fd08a" opacity="0.57"/><circle cx="193.7" cy="80.9" r="0.34" fill="#6a9cff" opacity="0.44"/><circle cx="202.4" cy="68.7" r="0.41" fill="#6a9cff" opacity="0.61"/><circle cx="148.5" cy="65.7" r="0.51" fill="#6a9cff" opacity="0.41"/><circle cx="156.4" cy="73.4" r="0.59" fill="#6a9cff" opacity="0.42"/><circle cx="174.2" cy="44.3" r="0.58" fill="#9ad0ff" opacity="0.83"/><circle cx="195.3" cy="87.0" r="0.38" fill="#a0e0c0" opacity="0.70"/><circle cx="182.8" cy="77.0" r="0.54" fill="#a0e0c0" opacity="0.82"/><circle cx="194.3" cy="120.6" r="0.54" fill="#c8e8a0" opacity="0.84"/><circle cx="199.6" cy="30.5" r="0.40" fill="#7fd08a" opacity="0.40"/><circle cx="195.8" cy="64.3" r="0.38" fill="#9ad0ff" opacity="0.70"/><circle cx="193.5" cy="26.2" r="0.57" fill="#a0e0c0" opacity="0.85"/><circle cx="204.9" cy="28.5" r="0.55" fill="#a0e0c0" opacity="0.54"/><circle cx="206.9" cy="112.5" r="0.49" fill="#7fd08a" opacity="0.36"/><circle cx="191.1" cy="86.8" r="0.49" fill="#a0e0c0" opacity="0.45"/><circle cx="150.6" cy="48.1" r="0.53" fill="#7fd08a" opacity="0.42"/><circle cx="185.6" cy="24.1" r="0.43" fill="#7fd08a" opacity="0.61"/><circle cx="174.5" cy="65.3" r="0.45" fill="#a0e0c0" opacity="0.70"/><circle cx="167.3" cy="57.1" r="0.46" fill="#c8e8a0" opacity="0.46"/><circle cx="193.7" cy="97.4" r="0.53" fill="#6a9cff" opacity="0.46"/><circle cx="179.2" cy="54.9" r="0.41" fill="#c8e8a0" opacity="0.41"/><circle cx="189.8" cy="33.7" r="0.35" fill="#6a9cff" opacity="0.53"/><circle cx="176.1" cy="58.3" r="0.61" fill="#6a9cff" opacity="0.57"/><circle cx="188.4" cy="23.3" r="0.42" fill="#c8e8a0" opacity="0.41"/><circle cx="200.5" cy="20.8" r="0.68" fill="#c8e8a0" opacity="0.72"/><circle cx="162.6" cy="92.2" r="0.37" fill="#a0e0c0" opacity="0.39"/><circle cx="174.5" cy="73.2" r="0.58" fill="#9ad0ff" opacity="0.77"/><circle cx="181.2" cy="101.4" r="0.48" fill="#c8e8a0" opacity="0.63"/><circle cx="191.0" cy="90.8" r="0.34" fill="#7fd08a" opacity="0.49"/><circle cx="200.7" cy="79.4" r="0.47" fill="#a0e0c0" opacity="0.64"/><circle cx="196.7" cy="26.7" r="0.62" fill="#6a9cff" opacity="0.39"/><circle cx="180.0" cy="103.8" r="0.45" fill="#7fd08a" opacity="0.87"/><circle cx="197.3" cy="78.4" r="0.32" fill="#a0e0c0" opacity="0.87"/><circle cx="168.2" cy="76.6" r="0.42" fill="#a0e0c0" opacity="0.64"/><circle cx="172.4" cy="46.6" r="0.57" fill="#c8e8a0" opacity="0.76"/><circle cx="179.2" cy="89.1" r="0.60" fill="#6a9cff" opacity="0.56"/><circle cx="200.1" cy="102.6" r="0.53" fill="#7fd08a" opacity="0.75"/><circle cx="194.3" cy="121.4" r="0.69" fill="#9ad0ff" opacity="0.80"/><circle cx="180.4" cy="28.5" r="0.47" fill="#a0e0c0" opacity="0.41"/><circle cx="197.7" cy="56.7" r="0.35" fill="#9ad0ff" opacity="0.59"/><circle cx="184.7" cy="68.3" r="0.56" fill="#c8e8a0" opacity="0.73"/><circle cx="164.4" cy="102.0" r="0.68" fill="#9ad0ff" opacity="0.75"/><circle cx="199.8" cy="106.8" r="0.64" fill="#a0e0c0" opacity="0.50"/><circle cx="180.9" cy="99.8" r="0.38" fill="#a0e0c0" opacity="0.50"/><circle cx="173.6" cy="91.4" r="0.65" fill="#9ad0ff" opacity="0.37"/><circle cx="168.5" cy="87.9" r="0.39" fill="#7fd08a" opacity="0.50"/><circle cx="190.6" cy="121.8" r="0.52" fill="#9ad0ff" opacity="0.70"/><circle cx="165.0" cy="71.0" r="0.44" fill="#9ad0ff" opacity="0.62"/><circle cx="193.8" cy="67.3" r="0.64" fill="#a0e0c0" opacity="0.77"/><circle cx="169.8" cy="102.4" r="0.62" fill="#6a9cff" opacity="0.55"/><circle cx="161.8" cy="79.2" r="0.47" fill="#9ad0ff" opacity="0.55"/><circle cx="177.8" cy="71.7" r="0.42" fill="#6a9cff" opacity="0.78"/><circle cx="184.4" cy="24.6" r="0.50" fill="#c8e8a0" opacity="0.77"/><circle cx="161.6" cy="66.6" r="0.67" fill="#a0e0c0" opacity="0.87"/><circle cx="201.2" cy="66.2" r="0.48" fill="#c8e8a0" opacity="0.47"/><circle cx="204.8" cy="100.4" r="0.40" fill="#a0e0c0" opacity="0.55"/><circle cx="164.5" cy="57.5" r="0.53" fill="#6a9cff" opacity="0.79"/><circle cx="189.5" cy="58.1" r="0.52" fill="#6a9cff" opacity="0.81"/><circle cx="177.7" cy="35.7" r="0.65" fill="#6a9cff" opacity="0.50"/><circle cx="176.5" cy="81.4" r="0.56" fill="#7fd08a" opacity="0.79"/><circle cx="192.8" cy="24.8" r="0.41" fill="#7fd08a" opacity="0.41"/><circle cx="183.8" cy="26.4" r="0.40" fill="#6a9cff" opacity="0.47"/><circle cx="191.3" cy="76.0" r="0.46" fill="#6a9cff" opacity="0.54"/><circle cx="204.9" cy="93.7" r="0.50" fill="#6a9cff" opacity="0.79"/><circle cx="206.0" cy="55.9" r="0.62" fill="#7fd08a" opacity="0.81"/><circle cx="199.5" cy="127.1" r="0.51" fill="#7fd08a" opacity="0.74"/><circle cx="193.8" cy="64.3" r="0.67" fill="#6a9cff" opacity="0.49"/><circle cx="185.8" cy="52.5" r="0.47" fill="#6a9cff" opacity="0.51"/><circle cx="205.0" cy="21.9" r="0.59" fill="#c8e8a0" opacity="0.52"/><circle cx="201.1" cy="103.1" r="0.53" fill="#7fd08a" opacity="0.85"/><circle cx="152.4" cy="40.4" r="0.54" fill="#9ad0ff" opacity="0.61"/><circle cx="174.1" cy="66.7" r="0.46" fill="#c8e8a0" opacity="0.85"/><circle cx="202.8" cy="88.3" r="0.49" fill="#a0e0c0" opacity="0.49"/><circle cx="199.5" cy="122.0" r="0.56" fill="#c8e8a0" opacity="0.77"/><circle cx="166.8" cy="40.4" r="0.62" fill="#9ad0ff" opacity="0.56"/><circle cx="175.3" cy="75.4" r="0.62" fill="#c8e8a0" opacity="0.38"/><circle cx="201.9" cy="119.4" r="0.66" fill="#6a9cff" opacity="0.60"/><circle cx="156.5" cy="64.3" r="0.47" fill="#9ad0ff" opacity="0.77"/><circle cx="194.3" cy="30.3" r="0.41" fill="#a0e0c0" opacity="0.64"/><circle cx="196.7" cy="111.2" r="0.44" fill="#7fd08a" opacity="0.69"/><circle cx="175.4" cy="119.1" r="0.33" fill="#6a9cff" opacity="0.76"/><circle cx="176.4" cy="74.2" r="0.62" fill="#7fd08a" opacity="0.58"/><circle cx="201.4" cy="25.6" r="0.38" fill="#6a9cff" opacity="0.65"/><circle cx="175.2" cy="33.4" r="0.43" fill="#c8e8a0" opacity="0.57"/><circle cx="184.7" cy="22.8" r="0.57" fill="#7fd08a" opacity="0.41"/><circle cx="166.4" cy="69.0" r="0.56" fill="#7fd08a" opacity="0.36"/><circle cx="165.3" cy="98.1" r="0.42" fill="#9ad0ff" opacity="0.41"/><circle cx="191.7" cy="115.2" r="0.66" fill="#9ad0ff" opacity="0.43"/><circle cx="182.1" cy="124.7" r="0.68" fill="#c8e8a0" opacity="0.77"/><circle cx="177.2" cy="25.2" r="0.38" fill="#9ad0ff" opacity="0.75"/><circle cx="177.7" cy="99.7" r="0.48" fill="#c8e8a0" opacity="0.56"/><circle cx="152.0" cy="37.6" r="0.63" fill="#7fd08a" opacity="0.68"/><circle cx="167.3" cy="23.5" r="0.67" fill="#6a9cff" opacity="0.43"/><circle cx="153.8" cy="32.3" r="0.49" fill="#6a9cff" opacity="0.86"/><circle cx="181.7" cy="100.1" r="0.58" fill="#a0e0c0" opacity="0.89"/><circle cx="192.9" cy="92.2" r="0.51" fill="#a0e0c0" opacity="0.49"/><circle cx="152.6" cy="50.9" r="0.34" fill="#6a9cff" opacity="0.56"/><circle cx="174.1" cy="107.3" r="0.54" fill="#7fd08a" opacity="0.44"/><circle cx="191.4" cy="120.7" r="0.39" fill="#a0e0c0" opacity="0.69"/><circle cx="174.4" cy="82.2" r="0.69" fill="#9ad0ff" opacity="0.63"/><circle cx="187.9" cy="112.8" r="0.53" fill="#9ad0ff" opacity="0.36"/><circle cx="184.2" cy="105.9" r="0.40" fill="#9ad0ff" opacity="0.67"/><circle cx="186.7" cy="53.5" r="0.41" fill="#c8e8a0" opacity="0.84"/><circle cx="170.3" cy="100.4" r="0.66" fill="#9ad0ff" opacity="0.65"/><circle cx="177.6" cy="80.6" r="0.37" fill="#c8e8a0" opacity="0.76"/><circle cx="200.1" cy="54.2" r="0.35" fill="#9ad0ff" opacity="0.80"/><circle cx="156.1" cy="82.1" r="0.37" fill="#9ad0ff" opacity="0.65"/><circle cx="202.9" cy="92.0" r="0.60" fill="#c8e8a0" opacity="0.82"/><circle cx="200.7" cy="87.0" r="0.36" fill="#7fd08a" opacity="0.58"/><circle cx="147.9" cy="62.5" r="0.51" fill="#c8e8a0" opacity="0.50"/><circle cx="178.1" cy="53.9" r="0.59" fill="#7fd08a" opacity="0.78"/><circle cx="167.0" cy="73.2" r="0.49" fill="#7fd08a" opacity="0.58"/><circle cx="151.8" cy="147.9" r=".4" fill="#7aa0ff" opacity=".5"/><circle cx="161.9" cy="149.5" r=".4" fill="#7aa0ff" opacity=".5"/><circle cx="141.4" cy="155.9" r=".4" fill="#7aa0ff" opacity=".5"/><circle cx="167.9" cy="152.2" r=".4" fill="#7aa0ff" opacity=".5"/><circle cx="135.7" cy="141.3" r=".4" fill="#7aa0ff" opacity=".5"/><circle cx="147.4" cy="153.5" r=".4" fill="#7aa0ff" opacity=".5"/><circle cx="144.4" cy="143.7" r=".4" fill="#7aa0ff" opacity=".5"/><circle cx="137.4" cy="153.5" r=".4" fill="#7aa0ff" opacity=".5"/><circle cx="159.4" cy="153.4" r=".4" fill="#7aa0ff" opacity=".5"/><circle cx="159.9" cy="145.5" r=".4" fill="#7aa0ff" opacity=".5"/><circle cx="161.4" cy="137.9" r=".4" fill="#7aa0ff" opacity=".5"/><circle cx="142.7" cy="140.3" r=".4" fill="#7aa0ff" opacity=".5"/><circle cx="144.5" cy="136.2" r=".4" fill="#7aa0ff" opacity=".5"/><circle cx="128.0" cy="140.3" r=".4" fill="#7aa0ff" opacity=".5"/><circle cx="173.3" cy="155.1" r=".4" fill="#7aa0ff" opacity=".5"/><circle cx="154.9" cy="152.5" r=".4" fill="#7aa0ff" opacity=".5"/><circle cx="136.6" cy="150.9" r=".4" fill="#7aa0ff" opacity=".5"/><circle cx="121.6" cy="149.4" r=".4" fill="#7aa0ff" opacity=".5"/><circle cx="147.5" cy="153.5" r=".4" fill="#7aa0ff" opacity=".5"/><circle cx="112.4" cy="150.6" r=".4" fill="#7aa0ff" opacity=".5"/><circle cx="123.3" cy="137.8" r=".4" fill="#7aa0ff" opacity=".5"/><circle cx="172.1" cy="151.2" r=".4" fill="#7aa0ff" opacity=".5"/><circle cx="134.8" cy="139.3" r=".4" fill="#7aa0ff" opacity=".5"/><circle cx="128.1" cy="143.0" r=".4" fill="#7aa0ff" opacity=".5"/><circle cx="175.0" cy="155.4" r=".4" fill="#7aa0ff" opacity=".5"/><circle cx="140.4" cy="135.4" r=".4" fill="#7aa0ff" opacity=".5"/><circle cx="127.2" cy="154.0" r=".4" fill="#7aa0ff" opacity=".5"/><circle cx="140.4" cy="134.5" r=".4" fill="#7aa0ff" opacity=".5"/><circle cx="171.0" cy="155.9" r=".4" fill="#7aa0ff" opacity=".5"/><circle cx="120.2" cy="146.4" r=".4" fill="#7aa0ff" opacity=".5"/><circle cx="119.4" cy="152.9" r=".4" fill="#7aa0ff" opacity=".5"/><circle cx="159.4" cy="138.1" r=".4" fill="#7aa0ff" opacity=".5"/><circle cx="172.5" cy="152.6" r=".4" fill="#7aa0ff" opacity=".5"/><circle cx="157.2" cy="154.4" r=".4" fill="#7aa0ff" opacity=".5"/><circle cx="121.7" cy="138.0" r=".4" fill="#7aa0ff" opacity=".5"/><circle cx="158.3" cy="135.1" r=".4" fill="#7aa0ff" opacity=".5"/><circle cx="154.8" cy="150.6" r=".4" fill="#7aa0ff" opacity=".5"/><circle cx="132.9" cy="147.2" r=".4" fill="#7aa0ff" opacity=".5"/><circle cx="122.2" cy="137.8" r=".4" fill="#7aa0ff" opacity=".5"/><circle cx="125.8" cy="146.6" r=".4" fill="#7aa0ff" opacity=".5"/><circle cx="111.7" cy="155.6" r=".4" fill="#7aa0ff" opacity=".5"/><circle cx="138.0" cy="143.7" r=".4" fill="#7aa0ff" opacity=".5"/>
</svg></div></div>
<div class="card" style="left:643px;top:517px"><div class="t">Why is Django Good<br>for Web Framework?</div><div class="img" style="top:50px;background:#075c7c"><svg width="207" height="156" viewBox="0 0 207 156" font-family="Liberation Sans">
<defs><linearGradient id="g8" x1="0" y1="0" x2="1" y2="1"><stop offset="0" stop-color="#02587a"/><stop offset="1" stop-color="#0a6586"/></linearGradient></defs>
<rect width="207" height="156" fill="url(#g8)"/>
<text x="-5" y="64" font-size="17" font-weight="bold" fill="#fff" textLength="91" letter-spacing="0">odementor</text>
<text x="-2" y="76" font-size="7.5" font-weight="bold" fill="#d8eef4" letter-spacing="2.1">MMUNITY</text>
<circle cx="162" cy="115" r="13" fill="none" stroke="#3e97b0" stroke-width=".9"/>
<path d="M155 113 L158 110 H166 L169 113 L162 120Z" fill="#5cc6dc"/>
<g fill="#0a7294" stroke="#3aaed0" stroke-width=".8">
<path d="M150 156 V143 L178 127 L207 139 V156Z"/>
<path d="M150 143 L179 156 M178 127 V137"/>
<path d="M192 127 V112 L199 107 L207 110 V130Z"/>
</g>
<path d="M195 62 Q193 70 194 96 H207 V62Z" fill="#0b3a4e"/>
<rect x="194" y="96" width="13" height="15" fill="#29a6c8"/>
<rect x="199" y="111" width="4" height="29" fill="#e4b090"/>
<rect x="197" y="139" width="7" height="3" fill="#8a4a20"/>
<circle cx="203" cy="56" r="4" fill="#e0a888"/><path d="M199 54 Q203 49 207 53 V55Z" fill="#222"/>
<g fill="#2a7d9c"><rect x="95" y="124" width="21" height="6" rx="3"/><rect x="82" y="133" width="19" height="6" rx="3"/></g>
<path d="M57 156 Q58 142 71 141 Q84 142 85 156Z" fill="#063a52"/>
<circle cx="71" cy="138" r="4" fill="#c89070"/><rect x="67" y="136" width="8" height="2" fill="#333"/>
<path d="M110 156 Q111 140 124 139 Q137 140 138 156Z" fill="#c4d4de"/>
<rect x="123.5" y="141" width="1" height="15" fill="#333"/>
<circle cx="124" cy="134" r="4" fill="#d8a080"/><path d="M120 132 Q124 127 128 132" fill="#111"/>
</svg></div></div>
<div class="card" style="left:879px;top:517px"><div class="t" style="left:31px">Langage python</div><svg class="abs" style="left:10px;top:8px" width="16" height="13" viewBox="0 0 16 13"><path d="M1 12.5 V8.5 Q1 4 6 4 H9.5 V0.5 L15.5 5.8 L9.5 11 V7.5 H6.5 Q3.5 7.5 2.5 10Z" fill="#555"/></svg><div class="img" style="top:29px;background:#fff"><svg width="207" height="177" viewBox="0 0 207 177" font-family="Liberation Sans">
<defs>
<linearGradient id="pb9" x1="0" y1="0" x2="1" y2="1"><stop offset="0" stop-color="#5a9fd4"/><stop offset="1" stop-color="#306998"/></linearGradient>
<linearGradient id="py9" x1="0" y1="0" x2="1" y2="1"><stop offset="0" stop-color="#ffe052"/><stop offset="1" stop-color="#ffc331"/></linearGradient>
<linearGradient id="bt9" x1="0" y1="0" x2="0" y2="1"><stop offset="0" stop-color="#fff" stop-opacity="0"/><stop offset="1" stop-color="#bdbdbd" stop-opacity=".85"/></linearGradient>
</defs>
<rect width="207" height="177" fill="#fff"/>
<g transform="translate(51,-21) scale(1.135)">
<path d="M48 0 C23 0 25 11 25 11 V22 H49 V26 H15 C15 26 0 24 0 49 C0 74 13 73 13 73 H21 V61 C21 61 20 48 34 48 H58 C58 48 71 48 71 36 V12 C71 12 73 0 48 0Z" fill="url(#pb9)"/>
<path d="M50 98 C75 98 73 87 73 87 V76 H49 V72 H83 C83 72 98 74 98 49 C98 24 85 25 85 25 H77 V37 C77 37 78 50 64 50 H40 C40 50 27 50 27 62 V86 C27 86 25 98 50 98Z" fill="url(#py9)"/>
<circle cx="62" cy="88" r="4" fill="#fff"/>
</g>
<rect x="0" y="118" width="207" height="47" fill="url(#bt9)"/>
<g fill="none" stroke="#626262" stroke-width="4.2" stroke-linecap="butt">
<path d="M31 164 V137 Q31 124 42 124 Q53 124 53 137 Q53 150.6 42 150.6 Q33 150.6 31 146"/>
<path d="M60 124 V140 Q60 150.6 68 150.6 Q76 150.6 76 140 M76 124 V154 Q76 164 66 164"/>
<path d="M92 116.5 V150.6 M84.5 126 H97"/>
<path d="M106 110 V150.6 M106 136 Q108 125 115 125 Q123 125 123 135 V150.6"/>
<ellipse cx="143" cy="137.3" rx="10.5" ry="13.2"/>
<path d="M161 124 V150.6 M161 136 Q163 125 170 125 Q178 125 178 135 V150.6"/>
</g>
<text x="185" y="121" font-size="6" fill="#666">TM</text>
<rect x="0" y="165" width="207" height="12" fill="#fff"/>
<rect x="2" y="168" width="203" height=".9" fill="#bbb"/>
<rect x="2" y="172.3" width="203" height=".9" fill="#bbb"/>
<g fill="#fff" stroke="#8a8a8a" stroke-width=".5"><rect x="12" y="147" width="5.8" height="5.8" rx="1"/><rect x="19.5" y="147" width="5.8" height="5.8" rx="1"/><rect x="12" y="154.5" width="5.8" height="5.8" rx="1"/><rect x="19.5" y="154.5" width="5.8" height="5.8" rx="1"/></g>
<g font-size="16" fill="#fff" stroke="#707070" stroke-width="1.9" paint-order="stroke"><text x="29" y="158.5" textLength="17">11</text><text x="73" y="158.5">3</text><text x="111" y="158.5" textLength="30">862</text></g>
<circle cx="60" cy="154" r="2.6" fill="#fff" stroke="#999" stroke-width=".4"/>
<path d="M64 147 Q72 154 64 161 Q68 154 64 147Z" fill="#fff" stroke="#999" stroke-width=".4"/>
<path d="M91 154 Q100 145 110 154 Q100 163 91 154Z" fill="#fff" stroke="#888" stroke-width=".5"/>
<circle cx="100.5" cy="154" r="2.8" fill="none" stroke="#888" stroke-width="1.3"/>
</svg></div></div>
<div class="card" style="left:1114px;top:517px"><div class="t">Langage Python :<br>Historique |<br>Techniques de<br>l’Ingénieur</div><div class="img" style="top:91px;background:#f4f4f4"><svg width="207" height="115" viewBox="0 0 207 115" font-family="Liberation Sans">
<defs>
<linearGradient id="gb10" x1="0" y1="0" x2="0" y2="1"><stop offset="0" stop-color="#f6f6f6"/><stop offset="1" stop-color="#e6e6e6"/></linearGradient>
<filter id="bl10"><feGaussianBlur stdDeviation="1"/></filter>
</defs>
<rect width="207" height="115" fill="#fff"/>
<path d="M12 10 Q12 4 17 4 Q20 4 21 7" fill="none" stroke="#444" stroke-width="2"/><circle cx="17" cy="2" r="1.3" fill="#d22"/>
<g fill="#d33"><rect x="22" y="6" width="14" height="1.5"/></g><g fill="#666"><rect x="22" y="9" width="16" height="1"/></g>
<rect x="48" y="7.5" width="40" height="1.5" fill="#d84050"/><rect x="89" y="7.5" width="20" height="1.5" fill="#e08890"/>
<rect x="128" y="5" width="32" height="6" fill="#e2e2e2"/><rect x="160" y="5" width="6" height="6" fill="#d42030"/>
<g fill="#555"><rect x="171" y="7" width="4" height="3"/><circle cx="185" cy="6.5" r="1.5"/><rect x="183" y="8.5" width="4" height="2.5"/><rect x="193" y="6.5" width="3" height="3" fill="#bbb"/></g>
<rect x="0" y="14" width="207" height=".7" fill="#eee"/>
<g fill="#bbb"><rect x="9" y="17" width="110" height="1"/><rect x="9" y="19.5" width="32" height="1"/></g><rect x="44" y="19.5" width="8" height="1" fill="#e88"/>
<g fill="#888"><rect x="172" y="17" width="20" height="2"/><rect x="170" y="20.5" width="30" height="1"/></g>
<g fill="#ccc"><rect x="16" y="27" width="24" height="1.2"/><rect x="185" y="27" width="22" height="1.2"/></g>
<path d="M25 33 H32 M25 33 L27 31 M25 33 L27 35" stroke="#bbb" stroke-width="1.2" fill="none"/>
<path d="M175 33 H182 M182 33 L180 31 M182 33 L180 35" stroke="#bbb" stroke-width="1.2" fill="none"/>
<rect x="57" y="27" width="42" height="1.1" fill="#777"/>
<rect x="57" y="34" width="17" height="1.3" fill="#888"/>
<text x="57" y="43" font-size="5.5" font-weight="bold" fill="#444" textLength="37">Langage Python</text>
<g fill="#999"><rect x="57" y="47" width="28" height="1"/><rect x="57" y="49.5" width="40" height="1"/></g>
<rect x="57" y="58" width="31" height="9" fill="#6ab22e"/><rect x="60" y="61.5" width="22" height="1.3" fill="#d8f0c8"/>
<path d="M30 73 H207 V112 H30 Q8 112 8 92.5 Q8 73 30 73Z" fill="url(#gb10)"/>
<g fill="#ccc"><rect x="80" y="76.5" width="40" height="1.2"/></g>
<rect x="42" y="80.5" width="98" height="1.6" fill="#a8c848"/><rect x="141" y="80.5" width="25" height="1.2" fill="#999"/>
<rect x="85" y="84.5" width="12" height="1.2" fill="#999"/>
<rect x="80" y="88.5" width="45" height="1.2" fill="#bbb"/>
<g fill="#a5a5a5"><rect x="43" y="93.5" width="32" height="1"/><rect x="43" y="96.5" width="32" height="1.2"/><rect x="43" y="99.5" width="32" height="1.2"/><rect x="49" y="102.5" width="20" height="1.2"/>
<rect x="84" y="93.5" width="30" height="1.2"/><rect x="84" y="96.5" width="30" height="1.2"/><rect x="90" y="99.5" width="18" height="1.2"/>
<rect x="126" y="93.5" width="33" height="1.2"/><rect x="126" y="96.5" width="33" height="1.2"/><rect x="128" y="99.5" width="30" height="1.2"/><rect x="134" y="102.5" width="20" height="1.2"/></g>
<g filter="url(#bl10)">
<path d="M15 107 Q15 90 26.5 88 Q38 90 38 107Z" fill="#5a92cc"/>
<ellipse cx="26.5" cy="79" rx="5" ry="6.5" fill="#d8a888"/>
<path d="M21 75 Q26 70 32 75" fill="#777"/>
</g>
<rect x="174" y="78" width="15" height="11" fill="#333"/><rect x="175" y="79" width="13" height="8" fill="#ddd"/>
<path d="M184 84 L192 82 L195 94 L187 96Z" fill="#2060d0"/>
<circle cx="199" cy="80" r="5" fill="#fff" stroke="#ccc" stroke-width=".6"/>
<rect x="167" y="95" width="32" height="8" fill="#6ab22e"/><rect x="172" y="98.5" width="20" height="1.2" fill="#d8f0c8"/>
</svg></div></div>
<div class="card" style="left:173px;top:752px"><div class="t">Python 3.9 : des<br>améliorations et des<br>innovations</div><div class="img" style="top:71px;background:#4d6670"><svg width="207" height="135" viewBox="0 0 207 135">
<rect width="207" height="135" fill="#4c6570"/>
<g stroke="#718992" stroke-width=".8" fill="none">
<path d="M0 16 L207 0 M0 27 L207 9 M0 38 L207 19 M0 48 L207 30 M0 58 L207 41 M0 68 L207 52"/>
</g>
<g stroke="#2f434b" stroke-width="1.1" fill="none">
<path d="M83 0 L111 52 M153 0 L139 52 M30 12 L67 52 M207 22 L162 52"/>
</g>
<g fill="#f2f5f5">
<path d="M100 28.5 L143.8 24.3 L140.3 32.7 L105.6 36.1Z"/>
<path d="M108.3 43 L138.9 39.6 L137.5 45.2 L111 46.5Z"/>
<path d="M33 35.4 L61 32.7 L68 38.2 L36 41Z"/>
<path d="M52.8 45.9 L77.8 43.8 L81.3 48 L55.6 49.3Z"/>
<path d="M157 0.7 L180.5 0 L179 4.9 L156 4.9Z"/>
<path d="M0 45 L8 44 L10 50 L0 51Z"/>
</g>
<path d="M139 48 L162.5 47 L161 51 L139 51.5Z" fill="#c9d2d5"/>
</svg></div></div>

<!-- bottom -->
<div id="bottom"></div>
<svg class="abs" style="left:25px;top:818px" width="90" height="70" viewBox="0 0 90 70">
<defs><filter id="sh1" x="-20%" y="-20%" width="140%" height="140%"><feDropShadow dx="0" dy="1" stdDeviation=".8" flood-color="#000" flood-opacity=".35"/></filter></defs>
<circle cx="45" cy="33" r="30" fill="#fff" stroke="#9a9a9a" stroke-width="1" filter="url(#sh1)"/>
<circle cx="45" cy="33" r="27" fill="#6596c4"/>
<polygon points="45.00,16.00 49.11,25.34 59.27,26.36 51.66,33.16 53.82,43.14 45.00,38.00 36.18,43.14 38.34,33.16 30.73,26.36 40.89,25.34" fill="#fff" stroke="#ddd" stroke-width=".5"/>
<g filter="url(#sh1)">
<path d="M5 41 H18 L18 56 H5 L10 48.5Z" fill="#fff" stroke="#ccc" stroke-width=".6"/>
<path d="M85 41 H72 L72 56 H85 L80 48.5Z" fill="#fff" stroke="#ccc" stroke-width=".6"/>
<path d="M15 41 H75 L72 51 Q62 54 45 54 Q28 54 18 51Z" fill="#fff" stroke="#d0d0d0" stroke-width=".6"/>
</g>
<g fill="#6596c4"><polygon points="29.00,43.20 30.00,45.62 32.61,45.83 30.62,47.53 31.23,50.07 29.00,48.70 26.77,50.07 27.38,47.53 25.39,45.83 28.00,45.62"/><polygon points="39.60,43.20 40.60,45.62 43.21,45.83 41.22,47.53 41.83,50.07 39.60,48.70 37.37,50.07 37.98,47.53 35.99,45.83 38.60,45.62"/><polygon points="50.00,43.20 51.00,45.62 53.61,45.83 51.62,47.53 52.23,50.07 50.00,48.70 47.77,50.07 48.38,47.53 46.39,45.83 49.00,45.62"/><polygon points="60.60,43.20 61.60,45.62 64.21,45.83 62.22,47.53 62.83,50.07 60.60,48.70 58.37,50.07 58.98,47.53 56.99,45.83 59.60,45.62"/></g>
</svg>
<svg class="abs" style="left:144px;top:818px" width="66" height="68" viewBox="0 0 66 68">
<defs><filter id="sh2" x="-20%" y="-20%" width="140%" height="140%"><feDropShadow dx="0" dy="1" stdDeviation=".7" flood-color="#000" flood-opacity=".4"/></filter></defs>
<path d="M32.6 3 A30 30 0 1 1 32.59 3 Z M32.6 10.4 A22.6 22.6 0 1 0 32.61 10.4 Z" fill="#fff" fill-rule="evenodd" stroke="#a0a0a0" stroke-width=".8" filter="url(#sh2)"/>
<polygon points="32.40,18.00 36.63,27.68 47.14,28.71 39.25,35.72 41.51,46.04 32.40,40.70 23.29,46.04 25.55,35.72 17.66,28.71 28.17,27.68" fill="#fff" stroke="#aaa" stroke-width=".6" filter="url(#sh2)"/>
</svg>
<svg class="abs" style="left:1300px;top:852px" width="92" height="28" viewBox="0 0 92 28">
<defs><filter id="sh3" x="-20%" y="-30%" width="140%" height="160%"><feDropShadow dx="0" dy="1" stdDeviation=".6" flood-color="#000" flood-opacity=".4"/></filter></defs>
<g fill="#fff" stroke="#a8a8a8" stroke-width=".7" filter="url(#sh3)">
<rect x="4.2" y="12.6" width="19" height="4" rx="2"/>
<circle cx="46" cy="14" r="9.6"/>
<path d="M75.5 5 H80.5 V12.6 H87.2 V16.8 H80.5 V23.6 H75.5 V16.8 H68.7 V12.6 H75.5Z" stroke-linejoin="round"/>
</g>
</svg>
<svg class="abs" style="left:1412px;top:828px" width="50" height="60" viewBox="0 0 50 60">
<defs><filter id="sh4" x="-20%" y="-20%" width="140%" height="140%"><feDropShadow dx="0" dy="1" stdDeviation=".7" flood-color="#000" flood-opacity=".35"/></filter></defs>
<g filter="url(#sh4)">
<rect x="17" y="2.6" width="16.7" height="5" rx="1.5" fill="#fff" stroke="#9a9a9a" stroke-width=".8"/>
<rect x="19.5" y="4.3" width="11.5" height="2.5" fill="#9a9a9a"/>
<path d="M6.5 12.8 V55 Q6.5 57 25 57 Q44.5 57 44.5 55 V12.8Z" fill="#fff" stroke="#9a9a9a" stroke-width=".8"/>
<rect x="5" y="6.4" width="40" height="6.4" rx="2" fill="#fff" stroke="#9a9a9a" stroke-width=".8"/>
</g>
<g stroke="#555" stroke-width="1"><path d="M10 15 V50 M16 15 V51 M25.5 15 V51 M34 15 V51 M40.7 15 V50"/></g>
</svg>
<div class="lbl" style="left:24px">Devenir Premium</div>
<div class="lbl" style="left:161px">Outils</div>
<div class="lbl" style="left:1331px">Zoom</div>
<div class="lbl" style="left:1415px">Poubelle</div>
</body></html>
